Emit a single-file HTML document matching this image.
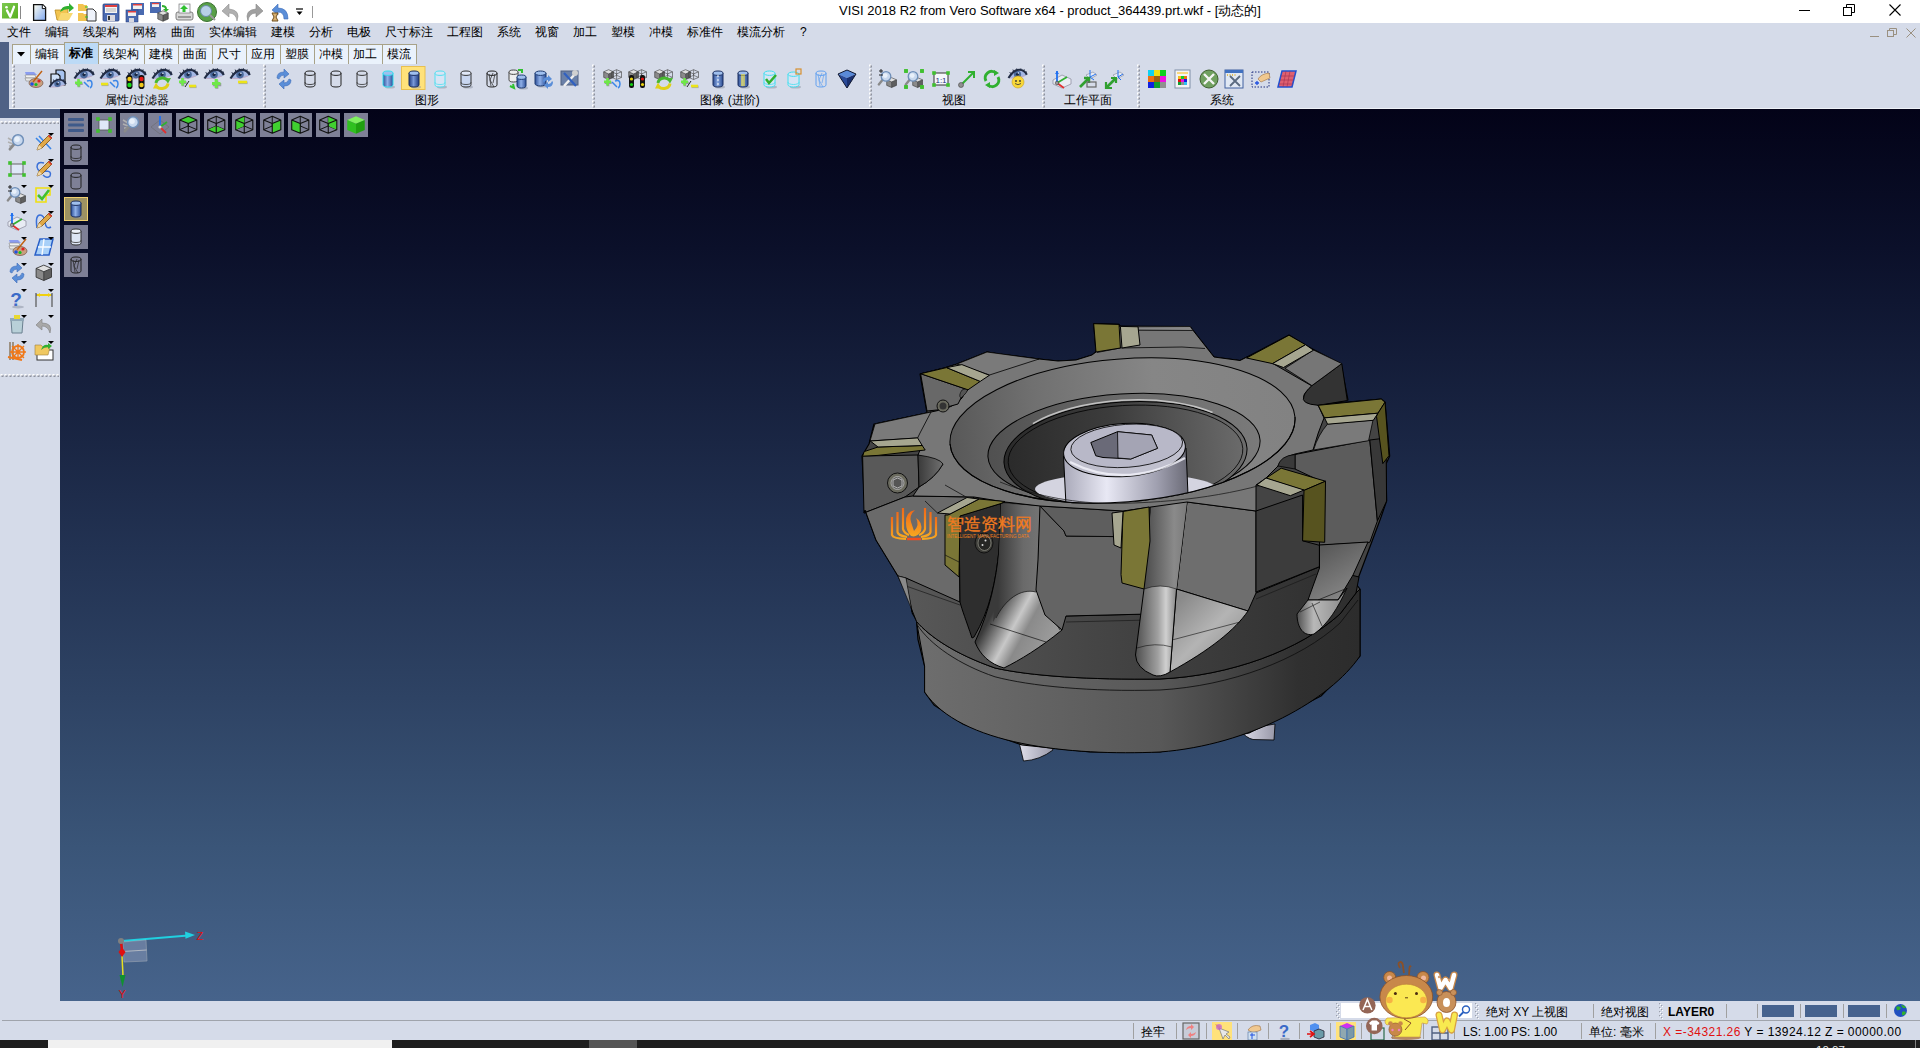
<!DOCTYPE html>
<html><head><meta charset="utf-8"><style>
*{margin:0;padding:0;box-sizing:border-box}
html,body{width:1920px;height:1048px;overflow:hidden;background:#d5dbe9;font-family:"Liberation Sans",sans-serif;font-size:12px;color:#000;position:relative}
.abs{position:absolute}
.t{position:absolute;white-space:nowrap;line-height:14px;font-size:12px}
svg{overflow:visible}
</style></head><body>
<svg width="0" height="0" style="position:absolute"><defs><pattern id="dpv" width="3" height="4" patternUnits="userSpaceOnUse"><rect x="0" y="0.5" width="2" height="2" fill="#fff"/><rect x="1" y="1.5" width="2" height="2" fill="#8e929e"/><rect x="1" y="1.5" width="1" height="1" fill="#e8e8ec"/></pattern><pattern id="dph" width="4" height="3" patternUnits="userSpaceOnUse"><rect x="0.5" y="0" width="2" height="2" fill="#fff"/><rect x="1.5" y="1" width="2" height="2" fill="#8e929e"/><rect x="1.5" y="1" width="1" height="1" fill="#e8e8ec"/></pattern><pattern id="dps" width="4" height="4" patternUnits="userSpaceOnUse"><rect x="0" y="0" width="1.2" height="1.2" fill="#9a9eaa"/><rect x="2" y="2" width="1.2" height="1.2" fill="#9a9eaa"/><rect x="1" y="1" width="1" height="1" fill="#fff"/><rect x="3" y="3" width="1" height="1" fill="#fff"/></pattern></defs></svg>
<div class="abs" style="left:0px;top:0px;width:1920px;height:23px;background:#fff"></div>
<svg class="abs" style="left:2px;top:3px" width="16" height="16" viewBox="0 0 16 16"><defs><linearGradient id="vg" x1="0" y1="0" x2="1" y2="1"><stop offset="0" stop-color="#7cc850"/><stop offset="1" stop-color="#58b020"/></linearGradient></defs><rect x="0" y="0" width="16" height="15.5" fill="url(#vg)"/><path d="M5 7.5 L8.2 13.8 L12 3.8" fill="none" stroke="#fff" stroke-width="2.3" stroke-linecap="round" stroke-linejoin="round"/><circle cx="4.5" cy="4.2" r="1.3" fill="#fff"/></svg>
<div class="abs" style="left:20px;top:6px;width:1px;height:13px;background:#888"></div>
<svg class="abs" style="left:30px;top:2px" width="20" height="20" viewBox="0 0 20 20"><defs><linearGradient id="dg" x1="0" y1="0" x2="1" y2="1"><stop offset="0" stop-color="#fffff0"/><stop offset="1" stop-color="#80a8f0"/></linearGradient></defs><path d="M3.6 2.6 H12.8 L15.6 5.4 V18.4 H3.6Z" fill="url(#dg)" stroke="#111" stroke-width="1.3"/><path d="M12.3 2.6 V6.6 H15.6" fill="#fff" stroke="#111" stroke-width="1"/></svg>
<svg class="abs" style="left:54px;top:2px" width="20" height="20" viewBox="0 0 20 20"><path d="M1 8 H7 L9 6 H14 V18 H3Z" fill="#f2c450" stroke="#b88a20" stroke-width=".8"/><path d="M4 18 L7 11 H19 L15 18Z" fill="#f8d870"/><path d="M6 10 Q8 3 15 4 L15 1 L20 6 L15 10 L15 7 Q10 7 6 10Z" fill="#30b030"/></svg>
<svg class="abs" style="left:77px;top:2px" width="20" height="20" viewBox="0 0 20 20"><path d="M1 2 H6 L7 3 H10 V9 H1Z" fill="#f2c450"/><path d="M1 11 H6 L7 12 H10 V19 H1Z" fill="#f2c450"/><path d="M10 7 H16 L19 10 V19 H10Z" fill="#eef2fa" stroke="#333" stroke-width="1"/><path d="M8 5 H11 M8 15 H11" stroke="#30c030" stroke-width="1.2"/></svg>
<svg class="abs" style="left:101px;top:2px" width="20" height="20" viewBox="0 0 20 20"><rect x="2" y="2" width="16" height="17" rx="1" fill="#4a6ab0" stroke="#2a4080" stroke-width=".8"/><rect x="4" y="3" width="12" height="8" fill="#f4f4f4"/><rect x="4" y="3" width="12" height="2" fill="#e04040"/><path d="M5 7 H15 M5 9 H15" stroke="#999" stroke-width=".7"/><rect x="6" y="13" width="8" height="6" fill="#d8d8e0"/><rect x="7" y="14" width="2" height="4" fill="#333"/></svg>
<svg class="abs" style="left:125px;top:2px" width="20" height="20" viewBox="0 0 20 20"><rect x="6" y="1" width="13" height="12" fill="#4a6ab0"/><rect x="8" y="2" width="9" height="5" fill="#f0f0f0"/><rect x="8" y="2" width="9" height="1.5" fill="#e04040"/><rect x="1" y="8" width="12" height="12" fill="#4a6ab0" stroke="#2a4080" stroke-width=".6"/><rect x="3" y="9" width="8" height="5" fill="#f0f0f0"/><rect x="3" y="9" width="8" height="1.5" fill="#e04040"/><rect x="4" y="16" width="5" height="4" fill="#d8d8e0"/></svg>
<svg class="abs" style="left:149px;top:2px" width="20" height="20" viewBox="0 0 20 20"><rect x="1" y="0" width="11" height="11" fill="#4a6ab0"/><rect x="3" y="1" width="7" height="4" fill="#f0f0f0"/><rect x="3" y="1" width="7" height="1.2" fill="#e04040"/><g transform="translate(8,8) scale(0.75)"><path d="M1 4 L8 1 L15 4 L8 7Z" fill="#e0e0e0"/><path d="M1 4 L8 7 V15 L1 12Z" fill="#8a8a8a"/><path d="M15 4 L8 7 V15 L15 12Z" fill="#5f5f5f"/><path d="M8 1 L15 4 L15 12 L8 15 L1 12 L1 4Z M1 4 L8 7 L15 4 M8 7V15" fill="none" stroke="#333" stroke-width=".8"/></g><path d="M13 3 Q18 3 18 7 L20 7 L17 10 L14 7 L16 7 Q16 5 13 5Z" fill="#30b030"/></svg>
<svg class="abs" style="left:174px;top:2px" width="20" height="20" viewBox="0 0 20 20"><rect x="2" y="10" width="17" height="8" rx="2" fill="#d8d8d8" stroke="#666" stroke-width=".8"/><rect x="5" y="2" width="11" height="9" fill="#f4f8fc" stroke="#777" stroke-width=".7"/><path d="M10 3 L14 7 H11.5 V10 H8.5 V7 H6Z" fill="#30c030"/><rect x="4" y="14" width="13" height="2" fill="#999"/></svg>
<svg class="abs" style="left:197px;top:2px" width="20" height="20" viewBox="0 0 20 20"><circle cx="10" cy="10" r="9.5" fill="#58a048" stroke="#3a7030" stroke-width="1"/><circle cx="9" cy="9" r="5.5" fill="#b8d0e8" stroke="#6a8aa8" stroke-width="1"/><path d="M13 13 L18 18" stroke="#999" stroke-width="2"/></svg>
<svg class="abs" style="left:221px;top:2px" width="20" height="20" viewBox="0 0 20 20"><path d="M16 19 Q20 8 8 7 L8 2 L1 9 L8 15 L8 11 Q15 11 16 19Z" fill="#b0b0b0" stroke="#909090" stroke-width=".6"/></svg>
<svg class="abs" style="left:244px;top:2px" width="20" height="20" viewBox="0 0 20 20"><path d="M4 19 Q0 8 12 7 L12 2 L19 9 L12 15 L12 11 Q5 11 4 19Z" fill="#a0a0a0" stroke="#888" stroke-width=".6"/></svg>
<svg class="abs" style="left:269px;top:2px" width="20" height="20" viewBox="0 0 20 20"><path d="M19 17 Q19 6 9 6 L9 2 L3 8 L9 13 L9 10 Q15 10 15 17Z" fill="#5a8ed8" stroke="#3c6cb8" stroke-width=".6"/><path d="M3 11 H9 L7 15 L9 19 H3 L5 15Z" fill="#d8b070" stroke="#705020" stroke-width="1"/></svg>
<svg class="abs" style="left:295px;top:8px" width="9" height="8" viewBox="0 0 9 8"><path d="M1 1 H8" stroke="#000" stroke-width="1.2"/><path d="M1.5 3.5 H7.5 L4.5 7Z" fill="#000"/></svg>
<div class="abs" style="left:312px;top:6px;width:1px;height:12px;background:#999"></div>
<div class="t" style="left:839px;top:4px;font-size:13px;color:#000">VISI 2018 R2 from Vero Software x64 - product_364439.prt.wkf - [动态的]</div>
<div class="abs" style="left:1799px;top:10px;width:11px;height:1px;background:#000"></div>
<svg class="abs" style="left:1843px;top:4px" width="12" height="12" viewBox="0 0 12 12"><rect x="0.5" y="3.5" width="8" height="8" fill="none" stroke="#000"/><path d="M3.5 3.5 V0.5 H11.5 V8.5 H8.5" fill="none" stroke="#000"/></svg>
<svg class="abs" style="left:1889px;top:4px" width="12" height="12" viewBox="0 0 12 12"><path d="M0.5 0.5 L11.5 11.5 M11.5 0.5 L0.5 11.5" stroke="#000" stroke-width="1.1"/></svg>
<div class="abs" style="left:0px;top:23px;width:1920px;height:86px;background:#d5dbe9"></div>
<div class="t" style="left:7px;top:25px;font-size:12px;line-height:14px">文件</div>
<div class="t" style="left:45px;top:25px;font-size:12px;line-height:14px">编辑</div>
<div class="t" style="left:83px;top:25px;font-size:12px;line-height:14px">线架构</div>
<div class="t" style="left:133px;top:25px;font-size:12px;line-height:14px">网格</div>
<div class="t" style="left:171px;top:25px;font-size:12px;line-height:14px">曲面</div>
<div class="t" style="left:209px;top:25px;font-size:12px;line-height:14px">实体编辑</div>
<div class="t" style="left:271px;top:25px;font-size:12px;line-height:14px">建模</div>
<div class="t" style="left:309px;top:25px;font-size:12px;line-height:14px">分析</div>
<div class="t" style="left:347px;top:25px;font-size:12px;line-height:14px">电极</div>
<div class="t" style="left:385px;top:25px;font-size:12px;line-height:14px">尺寸标注</div>
<div class="t" style="left:447px;top:25px;font-size:12px;line-height:14px">工程图</div>
<div class="t" style="left:497px;top:25px;font-size:12px;line-height:14px">系统</div>
<div class="t" style="left:535px;top:25px;font-size:12px;line-height:14px">视窗</div>
<div class="t" style="left:573px;top:25px;font-size:12px;line-height:14px">加工</div>
<div class="t" style="left:611px;top:25px;font-size:12px;line-height:14px">塑模</div>
<div class="t" style="left:649px;top:25px;font-size:12px;line-height:14px">冲模</div>
<div class="t" style="left:687px;top:25px;font-size:12px;line-height:14px">标准件</div>
<div class="t" style="left:737px;top:25px;font-size:12px;line-height:14px">模流分析</div>
<div class="t" style="left:800px;top:25px;font-size:12px;line-height:14px">?</div>
<div class="abs" style="left:1870px;top:36px;width:9px;height:1px;background:#9a9080"></div>
<svg class="abs" style="left:1887px;top:28px" width="10" height="10" viewBox="0 0 10 10"><rect x="0.5" y="2.5" width="6" height="6" fill="none" stroke="#9a9080"/><path d="M2.5 2.5 V0.5 H9.5 V6.5 H6.5" fill="none" stroke="#9a9080"/></svg>
<svg class="abs" style="left:1906px;top:28px" width="10" height="10" viewBox="0 0 10 10"><path d="M0.5 0.5 L9.5 9.5 M9.5 0.5 L0.5 9.5" stroke="#9a9080"/></svg>
<div class="abs" style="left:0px;top:42px;width:9px;height:67px;background:#4f6185"></div>
<div class="abs" style="left:0px;top:109px;width:60px;height:9px;background:#4f6185"></div>
<div class="abs" style="left:9px;top:64px;width:1911px;height:45px;background:#d5dbe9"></div>
<div class="abs" style="left:9px;top:108px;width:1911px;height:1px;background:#eef1f7"></div>
<div class="abs" style="left:12px;top:44px;width:405px;height:20px;background:#eaf2fc;border:1px solid #a8a288;border-bottom:none"></div>
<svg class="abs" style="left:17px;top:52px" width="9" height="5" viewBox="0 0 9 5"><path d="M0 0 H8 L4 4.5Z" fill="#000"/></svg>
<div class="abs" style="left:30px;top:44px;width:1px;height:20px;background:#a8a288"></div>
<div class="t" style="left:30px;top:47px;width:34px;text-align:center;font-size:12px">编辑</div>
<div class="abs" style="left:64px;top:42px;width:35px;height:22px;background:#bcdaf6;border:1px solid #a8a288;border-bottom:none"></div>
<div class="t" style="left:64px;top:46px;width:34px;text-align:center;font-weight:bold;font-size:12px">标准</div>
<div class="abs" style="left:98px;top:44px;width:1px;height:20px;background:#a8a288"></div>
<div class="t" style="left:98px;top:47px;width:46px;text-align:center;font-size:12px">线架构</div>
<div class="abs" style="left:144px;top:44px;width:1px;height:20px;background:#a8a288"></div>
<div class="t" style="left:144px;top:47px;width:34px;text-align:center;font-size:12px">建模</div>
<div class="abs" style="left:178px;top:44px;width:1px;height:20px;background:#a8a288"></div>
<div class="t" style="left:178px;top:47px;width:34px;text-align:center;font-size:12px">曲面</div>
<div class="abs" style="left:212px;top:44px;width:1px;height:20px;background:#a8a288"></div>
<div class="t" style="left:212px;top:47px;width:34px;text-align:center;font-size:12px">尺寸</div>
<div class="abs" style="left:246px;top:44px;width:1px;height:20px;background:#a8a288"></div>
<div class="t" style="left:246px;top:47px;width:34px;text-align:center;font-size:12px">应用</div>
<div class="abs" style="left:280px;top:44px;width:1px;height:20px;background:#a8a288"></div>
<div class="t" style="left:280px;top:47px;width:34px;text-align:center;font-size:12px">塑膜</div>
<div class="abs" style="left:314px;top:44px;width:1px;height:20px;background:#a8a288"></div>
<div class="t" style="left:314px;top:47px;width:34px;text-align:center;font-size:12px">冲模</div>
<div class="abs" style="left:348px;top:44px;width:1px;height:20px;background:#a8a288"></div>
<div class="t" style="left:348px;top:47px;width:34px;text-align:center;font-size:12px">加工</div>
<div class="abs" style="left:382px;top:44px;width:1px;height:20px;background:#a8a288"></div>
<div class="t" style="left:382px;top:47px;width:34px;text-align:center;font-size:12px">模流</div>
<svg class="abs" style="left:12px;top:64px" width="3" height="44" viewBox="0 0 3 44"><rect width="3" height="44" fill="url(#dpv)"/></svg>
<svg class="abs" style="left:263px;top:64px" width="3" height="44" viewBox="0 0 3 44"><rect width="3" height="44" fill="url(#dpv)"/></svg>
<svg class="abs" style="left:592px;top:64px" width="3" height="44" viewBox="0 0 3 44"><rect width="3" height="44" fill="url(#dpv)"/></svg>
<svg class="abs" style="left:869px;top:64px" width="3" height="44" viewBox="0 0 3 44"><rect width="3" height="44" fill="url(#dpv)"/></svg>
<svg class="abs" style="left:1042px;top:64px" width="3" height="44" viewBox="0 0 3 44"><rect width="3" height="44" fill="url(#dpv)"/></svg>
<svg class="abs" style="left:1137px;top:64px" width="3" height="44" viewBox="0 0 3 44"><rect width="3" height="44" fill="url(#dpv)"/></svg>
<svg class="abs" style="left:23px;top:69px" width="20" height="20" viewBox="0 0 20 20"><path d="M2 3 H11 L14 6 H3Z" fill="#8a9cf0"/><path d="M2 6 H12 L13 9 H3Z" fill="#f0f0f0" stroke="#888" stroke-width=".6"/><path d="M2 9 H12 L13 12 H3Z" fill="#e8e8e8" stroke="#888" stroke-width=".6"/><ellipse cx="13" cy="14" rx="7" ry="4.5" fill="#c8a080" stroke="#806050" stroke-width=".8"/><circle cx="9" cy="15" r="1.8" fill="#2050e0"/><circle cx="13" cy="15.5" r="1.6" fill="#10c020"/><circle cx="16" cy="12" r="1.6" fill="#e02020"/><path d="M10 13 L19 2" stroke="#c06010" stroke-width="1.4"/></svg>
<svg class="abs" style="left:48px;top:69px" width="20" height="20" viewBox="0 0 20 20"><path d="M8 1 H15 L17 3 V16 H8Z" fill="#a8c4f0" stroke="#111" stroke-width="1.2"/><path d="M3 5 H10 L12 7 V16 H3Z" fill="#cfe0f8" stroke="#111" stroke-width="1.2"/><g transform="translate(1,10) scale(0.85)"><path d="M0.5 9.5 Q6 1.5 12 1.5 Q17.5 1.5 19.5 6.5 Q12 10.5 0.5 9.5Z" fill="#a4b8e4"/><path d="M2 9.4 Q10 10.8 18 7" fill="none" stroke="#c8a8c0" stroke-width=".8"/><circle cx="10" cy="5.6" r="3.8" fill="#4b6a9c"/><circle cx="10" cy="5.6" r="1.6" fill="#1a2844"/><circle cx="10.9" cy="4.3" r=".8" fill="#e8f0ff"/><path d="M0.5 9.5 Q6 0.6 12 0.8 Q17.5 1 19.8 6" fill="none" stroke="#222c44" stroke-width="2.2"/><path d="M3 5 L1.8 3.2 M6 2.6 L5.2 0.6 M9.5 1.4 L9.2 -0.6 M13 1.2 L13.6 -0.7 M16 2.2 L17.2 0.4 M18.4 4 L20 2.8" stroke="#222c44" stroke-width="1"/></g></svg>
<svg class="abs" style="left:74px;top:69px" width="20" height="20" viewBox="0 0 20 20"><g transform="translate(0,0) scale(1.0)"><path d="M0.5 9.5 Q6 1.5 12 1.5 Q17.5 1.5 19.5 6.5 Q12 10.5 0.5 9.5Z" fill="#a4b8e4"/><path d="M2 9.4 Q10 10.8 18 7" fill="none" stroke="#c8a8c0" stroke-width=".8"/><circle cx="10" cy="5.6" r="3.8" fill="#4b6a9c"/><circle cx="10" cy="5.6" r="1.6" fill="#1a2844"/><circle cx="10.9" cy="4.3" r=".8" fill="#e8f0ff"/><path d="M0.5 9.5 Q6 0.6 12 0.8 Q17.5 1 19.8 6" fill="none" stroke="#222c44" stroke-width="2.2"/><path d="M3 5 L1.8 3.2 M6 2.6 L5.2 0.6 M9.5 1.4 L9.2 -0.6 M13 1.2 L13.6 -0.7 M16 2.2 L17.2 0.4 M18.4 4 L20 2.8" stroke="#222c44" stroke-width="1"/></g><g transform="translate(1,10) scale(1.0)"><path d="M4 1.2V8.2M0.7 4.7H7.7" stroke="#707070" stroke-width="2.6" opacity=".6"/><path d="M3.5 0V7.5M0 3.7H7" stroke="#6ee848" stroke-width="2.6"/></g><g transform="translate(10,11)"><path d="M0 2 L5 7 M3 1 Q8 -1 8 4 Q8 7 6 8" fill="none" stroke="#3a86e8" stroke-width="1.5"/></g></svg>
<svg class="abs" style="left:100px;top:69px" width="20" height="20" viewBox="0 0 20 20"><g transform="translate(0,0) scale(1.0)"><path d="M0.5 9.5 Q6 1.5 12 1.5 Q17.5 1.5 19.5 6.5 Q12 10.5 0.5 9.5Z" fill="#a4b8e4"/><path d="M2 9.4 Q10 10.8 18 7" fill="none" stroke="#c8a8c0" stroke-width=".8"/><circle cx="10" cy="5.6" r="3.8" fill="#4b6a9c"/><circle cx="10" cy="5.6" r="1.6" fill="#1a2844"/><circle cx="10.9" cy="4.3" r=".8" fill="#e8f0ff"/><path d="M0.5 9.5 Q6 0.6 12 0.8 Q17.5 1 19.8 6" fill="none" stroke="#222c44" stroke-width="2.2"/><path d="M3 5 L1.8 3.2 M6 2.6 L5.2 0.6 M9.5 1.4 L9.2 -0.6 M13 1.2 L13.6 -0.7 M16 2.2 L17.2 0.4 M18.4 4 L20 2.8" stroke="#222c44" stroke-width="1"/></g><path d="M1.6 15.8H8.6" stroke="#808060" stroke-width="2.6" opacity=".5"/><path d="M1 15H8" stroke="#ece418" stroke-width="2.6"/><g transform="translate(10,11)"><path d="M0 2 L5 7 M3 1 Q8 -1 8 4 Q8 7 6 8" fill="none" stroke="#3a86e8" stroke-width="1.5"/></g></svg>
<svg class="abs" style="left:126px;top:69px" width="20" height="20" viewBox="0 0 20 20"><g transform="translate(0,0) scale(1.0)"><path d="M0.5 9.5 Q6 1.5 12 1.5 Q17.5 1.5 19.5 6.5 Q12 10.5 0.5 9.5Z" fill="#a4b8e4"/><path d="M2 9.4 Q10 10.8 18 7" fill="none" stroke="#c8a8c0" stroke-width=".8"/><circle cx="10" cy="5.6" r="3.8" fill="#4b6a9c"/><circle cx="10" cy="5.6" r="1.6" fill="#1a2844"/><circle cx="10.9" cy="4.3" r=".8" fill="#e8f0ff"/><path d="M0.5 9.5 Q6 0.6 12 0.8 Q17.5 1 19.8 6" fill="none" stroke="#222c44" stroke-width="2.2"/><path d="M3 5 L1.8 3.2 M6 2.6 L5.2 0.6 M9.5 1.4 L9.2 -0.6 M13 1.2 L13.6 -0.7 M16 2.2 L17.2 0.4 M18.4 4 L20 2.8" stroke="#222c44" stroke-width="1"/></g><rect x="0.5" y="6" width="6" height="14" rx="2.8" fill="#111"/><rect x="12.5" y="6" width="6" height="14" rx="2.8" fill="#111"/><circle cx="3.5" cy="10" r="2.2" fill="#f0c818"/><circle cx="3.5" cy="16" r="2.2" fill="#18d818"/><circle cx="15.5" cy="10" r="2.2" fill="#e81818"/><circle cx="15.5" cy="16" r="2.2" fill="#f0c818"/></svg>
<svg class="abs" style="left:152px;top:69px" width="20" height="20" viewBox="0 0 20 20"><g transform="translate(0,0) scale(1.0)"><path d="M0.5 9.5 Q6 1.5 12 1.5 Q17.5 1.5 19.5 6.5 Q12 10.5 0.5 9.5Z" fill="#a4b8e4"/><path d="M2 9.4 Q10 10.8 18 7" fill="none" stroke="#c8a8c0" stroke-width=".8"/><circle cx="10" cy="5.6" r="3.8" fill="#4b6a9c"/><circle cx="10" cy="5.6" r="1.6" fill="#1a2844"/><circle cx="10.9" cy="4.3" r=".8" fill="#e8f0ff"/><path d="M0.5 9.5 Q6 0.6 12 0.8 Q17.5 1 19.8 6" fill="none" stroke="#222c44" stroke-width="2.2"/><path d="M3 5 L1.8 3.2 M6 2.6 L5.2 0.6 M9.5 1.4 L9.2 -0.6 M13 1.2 L13.6 -0.7 M16 2.2 L17.2 0.4 M18.4 4 L20 2.8" stroke="#222c44" stroke-width="1"/></g><path d="M4 14 A6.5 5.5 0 0 1 15.5 11" fill="none" stroke="#48b830" stroke-width="3"/><path d="M12.5 9.5 L19 9 L16 14.5Z" fill="#48b830"/><path d="M16 14.5 A6.5 5.5 0 0 1 4.5 17.5" fill="none" stroke="#e0d018" stroke-width="3"/><path d="M7.5 19.5 L1 19.5 L4 13.5Z" fill="#e0d018"/></svg>
<svg class="abs" style="left:178px;top:69px" width="20" height="20" viewBox="0 0 20 20"><g transform="translate(0,0) scale(1.0)"><path d="M0.5 9.5 Q6 1.5 12 1.5 Q17.5 1.5 19.5 6.5 Q12 10.5 0.5 9.5Z" fill="#a4b8e4"/><path d="M2 9.4 Q10 10.8 18 7" fill="none" stroke="#c8a8c0" stroke-width=".8"/><circle cx="10" cy="5.6" r="3.8" fill="#4b6a9c"/><circle cx="10" cy="5.6" r="1.6" fill="#1a2844"/><circle cx="10.9" cy="4.3" r=".8" fill="#e8f0ff"/><path d="M0.5 9.5 Q6 0.6 12 0.8 Q17.5 1 19.8 6" fill="none" stroke="#222c44" stroke-width="2.2"/><path d="M3 5 L1.8 3.2 M6 2.6 L5.2 0.6 M9.5 1.4 L9.2 -0.6 M13 1.2 L13.6 -0.7 M16 2.2 L17.2 0.4 M18.4 4 L20 2.8" stroke="#222c44" stroke-width="1"/></g><g transform="translate(1,9) scale(1.0)"><path d="M4 1.2V8.2M0.7 4.7H7.7" stroke="#707070" stroke-width="2.6" opacity=".6"/><path d="M3.5 0V7.5M0 3.7H7" stroke="#6ee848" stroke-width="2.6"/></g><path d="M7 18 L11 12" stroke="#222" stroke-width="1"/><path d="M11.6 17.8H18.6" stroke="#808060" stroke-width="2.6" opacity=".5"/><path d="M11 17H18" stroke="#ece418" stroke-width="2.6"/></svg>
<svg class="abs" style="left:204px;top:69px" width="20" height="20" viewBox="0 0 20 20"><g transform="translate(0,0) scale(1.0)"><path d="M0.5 9.5 Q6 1.5 12 1.5 Q17.5 1.5 19.5 6.5 Q12 10.5 0.5 9.5Z" fill="#a4b8e4"/><path d="M2 9.4 Q10 10.8 18 7" fill="none" stroke="#c8a8c0" stroke-width=".8"/><circle cx="10" cy="5.6" r="3.8" fill="#4b6a9c"/><circle cx="10" cy="5.6" r="1.6" fill="#1a2844"/><circle cx="10.9" cy="4.3" r=".8" fill="#e8f0ff"/><path d="M0.5 9.5 Q6 0.6 12 0.8 Q17.5 1 19.8 6" fill="none" stroke="#222c44" stroke-width="2.2"/><path d="M3 5 L1.8 3.2 M6 2.6 L5.2 0.6 M9.5 1.4 L9.2 -0.6 M13 1.2 L13.6 -0.7 M16 2.2 L17.2 0.4 M18.4 4 L20 2.8" stroke="#222c44" stroke-width="1"/></g><g transform="translate(8,10) scale(1.2)"><path d="M4 1.2V8.2M0.7 4.7H7.7" stroke="#707070" stroke-width="2.6" opacity=".6"/><path d="M3.5 0V7.5M0 3.7H7" stroke="#6ee848" stroke-width="2.6"/></g></svg>
<svg class="abs" style="left:230px;top:69px" width="20" height="20" viewBox="0 0 20 20"><g transform="translate(0,0) scale(1.0)"><path d="M0.5 9.5 Q6 1.5 12 1.5 Q17.5 1.5 19.5 6.5 Q12 10.5 0.5 9.5Z" fill="#a4b8e4"/><path d="M2 9.4 Q10 10.8 18 7" fill="none" stroke="#c8a8c0" stroke-width=".8"/><circle cx="10" cy="5.6" r="3.8" fill="#4b6a9c"/><circle cx="10" cy="5.6" r="1.6" fill="#1a2844"/><circle cx="10.9" cy="4.3" r=".8" fill="#e8f0ff"/><path d="M0.5 9.5 Q6 0.6 12 0.8 Q17.5 1 19.8 6" fill="none" stroke="#222c44" stroke-width="2.2"/><path d="M3 5 L1.8 3.2 M6 2.6 L5.2 0.6 M9.5 1.4 L9.2 -0.6 M13 1.2 L13.6 -0.7 M16 2.2 L17.2 0.4 M18.4 4 L20 2.8" stroke="#222c44" stroke-width="1"/></g><path d="M8.6 13.8H17.6" stroke="#808060" stroke-width="2.6" opacity=".5"/><path d="M8 13H17" stroke="#ece418" stroke-width="2.6"/></svg>
<div class="t" style="left:77px;top:93px;width:120px;text-align:center;font-size:12px">属性/过滤器</div>
<svg class="abs" style="left:274px;top:69px" width="20" height="20" viewBox="0 0 20 20"><path d="M3 9 Q3 3 10 3 L10 0 L15 5 L10 9 L10 6 Q6 6 5 10Z" fill="#5a8ed8" stroke="#3c6cb8" stroke-width=".6"/><path d="M17 11 Q17 17 10 17 L10 20 L5 15 L10 11 L10 14 Q14 14 15 10Z" fill="#5a8ed8" stroke="#3c6cb8" stroke-width=".6"/></svg>
<svg class="abs" style="left:300px;top:69px" width="20" height="20" viewBox="0 0 20 20"><path d="M5 4.2 V15.8 A5.0 2.2 0 0 0 15 15.8 V4.2" fill="none" stroke="#222" stroke-width="1"/><ellipse cx="10.0" cy="4.2" rx="5.0" ry="2.2" fill="none" stroke="#222" stroke-width="1"/><path d="M5 13.3 A5.0 2.2 0 0 0 15 13.3" fill="none" stroke="#222" stroke-width="0.8"/></svg>
<svg class="abs" style="left:326px;top:69px" width="20" height="20" viewBox="0 0 20 20"><path d="M5 4.2 V15.8 A5.0 2.2 0 0 0 15 15.8 V4.2" fill="none" stroke="#222" stroke-width="1"/><ellipse cx="10.0" cy="4.2" rx="5.0" ry="2.2" fill="none" stroke="#222" stroke-width="1"/></svg>
<svg class="abs" style="left:352px;top:69px" width="20" height="20" viewBox="0 0 20 20"><path d="M5 4.2 V15.8 A5.0 2.2 0 0 0 15 15.8 V4.2" fill="none" stroke="#333" stroke-width="1"/><ellipse cx="10.0" cy="4.2" rx="5.0" ry="2.2" fill="none" stroke="#333" stroke-width="1"/><path d="M5 13.3 A5.0 2.2 0 0 0 15 13.3" fill="none" stroke="#333" stroke-width="0.8"/></svg>
<svg class="abs" style="left:378px;top:69px" width="20" height="20" viewBox="0 0 20 20"><defs><linearGradient id="bcg1"><stop offset="0" stop-color="#2c4f98"/><stop offset=".45" stop-color="#8fb0e8"/><stop offset="1" stop-color="#2c4f98"/></linearGradient></defs><ellipse cx="12.0" cy="18" rx="5.0" ry="1.5" fill="#8890a0" opacity=".5"/><path d="M5 4.2 V15.8 A5.0 2.2 0 0 0 15 15.8 V4.2" fill="url(#bcg1)" stroke="#30e0f0" stroke-width="1"/><ellipse cx="10.0" cy="4.2" rx="5.0" ry="2.2" fill="#9fbfee" stroke="#30e0f0" stroke-width="1"/></svg>
<svg class="abs" style="left:404px;top:69px" width="20" height="20" viewBox="0 0 20 20"><rect x="-2.5" y="-2.5" width="23.5" height="23" fill="#ffe27a" stroke="#e8c050" stroke-width="1"/><defs><linearGradient id="bcg2"><stop offset="0" stop-color="#1e3a80"/><stop offset=".45" stop-color="#7898d8"/><stop offset="1" stop-color="#1e3a80"/></linearGradient></defs><ellipse cx="12.0" cy="18" rx="5.0" ry="1.5" fill="#8890a0" opacity=".5"/><path d="M5 4.2 V15.8 A5.0 2.2 0 0 0 15 15.8 V4.2" fill="url(#bcg2)" stroke="#1a2e60" stroke-width="1"/><ellipse cx="10.0" cy="4.2" rx="5.0" ry="2.2" fill="#9fbfee" stroke="#1a2e60" stroke-width="1"/></svg>
<svg class="abs" style="left:430px;top:69px" width="20" height="20" viewBox="0 0 20 20"><ellipse cx="12.0" cy="18" rx="5.0" ry="1.5" fill="#8890a0" opacity=".5"/><path d="M5 4.2 V15.8 A5.0 2.2 0 0 0 15 15.8 V4.2" fill="#d8e4f4" stroke="#50e0f0" stroke-width="1"/><ellipse cx="10.0" cy="4.2" rx="5.0" ry="2.2" fill="#d8e4f4" stroke="#50e0f0" stroke-width="1"/><path d="M5 13.3 A5.0 2.2 0 0 0 15 13.3" fill="none" stroke="#50e0f0" stroke-width="0.8"/></svg>
<svg class="abs" style="left:456px;top:69px" width="20" height="20" viewBox="0 0 20 20"><ellipse cx="12.0" cy="18" rx="5.0" ry="1.5" fill="#8890a0" opacity=".5"/><path d="M5 4.2 V15.8 A5.0 2.2 0 0 0 15 15.8 V4.2" fill="#c8d6f0" stroke="#333" stroke-width="1"/><ellipse cx="10.0" cy="4.2" rx="5.0" ry="2.2" fill="#e0e8f8" stroke="#333" stroke-width="1"/><path d="M5 13.3 A5.0 2.2 0 0 0 15 13.3" fill="none" stroke="#333" stroke-width="0.8"/></svg>
<svg class="abs" style="left:482px;top:69px" width="20" height="20" viewBox="0 0 20 20"><path d="M5 4.2 V15.8 A5.0 2.2 0 0 0 15 15.8 V4.2" fill="none" stroke="#222" stroke-width="1"/><ellipse cx="10.0" cy="4.2" rx="5.0" ry="2.2" fill="none" stroke="#222" stroke-width="1"/><path d="M7 5 L9 17 M11 4 L8 11 L12 18 M13 5 L11 14" stroke="#222" stroke-width=".7" fill="none"/></svg>
<svg class="abs" style="left:508px;top:69px" width="20" height="20" viewBox="0 0 20 20"><path d="M1 3.2 V10.8 A4.5 2.2 0 0 0 10 10.8 V3.2" fill="#eee" stroke="#444" stroke-width="1"/><ellipse cx="5.5" cy="3.2" rx="4.5" ry="2.2" fill="#eee" stroke="#444" stroke-width="1"/><defs><linearGradient id="bcg3"><stop offset="0" stop-color="#2c4f98"/><stop offset=".45" stop-color="#8fb0e8"/><stop offset="1" stop-color="#2c4f98"/></linearGradient></defs><ellipse cx="15.5" cy="19" rx="4.5" ry="1.5" fill="#8890a0" opacity=".5"/><path d="M9 8.2 V16.8 A4.5 2.2 0 0 0 18 16.8 V8.2" fill="url(#bcg3)" stroke="#1d3a70" stroke-width="1"/><ellipse cx="13.5" cy="8.2" rx="4.5" ry="2.2" fill="#9fbfee" stroke="#1d3a70" stroke-width="1"/><path d="M10 1 L14 1 L14 4" stroke="#30c030" stroke-width="2" fill="none"/><path d="M2 17 L6 19 L5 15" stroke="#30c030" stroke-width="2" fill="none"/></svg>
<svg class="abs" style="left:534px;top:69px" width="20" height="20" viewBox="0 0 20 20"><defs><linearGradient id="bcg4"><stop offset="0" stop-color="#2c4f98"/><stop offset=".45" stop-color="#8fb0e8"/><stop offset="1" stop-color="#2c4f98"/></linearGradient></defs><ellipse cx="8.5" cy="17" rx="5.5" ry="1.5" fill="#8890a0" opacity=".5"/><path d="M1 4.2 V14.8 A5.5 2.2 0 0 0 12 14.8 V4.2" fill="url(#bcg4)" stroke="#1d3a70" stroke-width="1"/><ellipse cx="6.5" cy="4.2" rx="5.5" ry="2.2" fill="#9fbfee" stroke="#1d3a70" stroke-width="1"/><path d="M9 12 Q9 8 14 8 L14 6 L18 10 L14 13 L14 11 Q11 11 10 14Z" fill="#5a8ed8"/><path d="M19 13 Q19 18 14 18 L14 20 L10 16 L14 13 L14 15 Q17 15 18 12Z" fill="#5a8ed8"/></svg>
<svg class="abs" style="left:560px;top:69px" width="20" height="20" viewBox="0 0 20 20"><rect x="1" y="2" width="17" height="14" fill="#6a80a8" stroke="#506080"/><path d="M4 17 L16 4" stroke="#f0f0f0" stroke-width="2.5"/><path d="M4 4 L16 17" stroke="#3060c0" stroke-width="2.2"/><circle cx="15" cy="4" r="3" fill="#d0d0d0"/></svg>
<div class="t" style="left:367px;top:93px;width:120px;text-align:center;font-size:12px">图形</div>
<svg class="abs" style="left:603px;top:69px" width="20" height="20" viewBox="0 0 20 20"><g transform="translate(0,0) scale(0.7)"><path d="M1 4 L8 1 L15 4 L8 7Z" fill="#e0e0e0"/><path d="M1 4 L8 7 V15 L1 12Z" fill="#8a8a8a"/><path d="M15 4 L8 7 V15 L15 12Z" fill="#5f5f5f"/><path d="M8 1 L15 4 L15 12 L8 15 L1 12 L1 4Z M1 4 L8 7 L15 4 M8 7V15" fill="none" stroke="#333" stroke-width=".8"/></g><g transform="translate(8,0) scale(0.7)" fill="none" stroke="#444" stroke-linejoin="round"><path d="M8 1 V9 M1 12 L8 9 L15 12" stroke-width=".8"/><path d="M8 1 L15 4 L15 12 L8 15 L1 12 L1 4Z M1 4 L8 7 L15 4 M8 7 V15" stroke-width=".9"/></g><g transform="translate(1,9) scale(1.0)"><path d="M4 1.2V8.2M0.7 4.7H7.7" stroke="#707070" stroke-width="2.6" opacity=".6"/><path d="M3.5 0V7.5M0 3.7H7" stroke="#6ee848" stroke-width="2.6"/></g><g transform="translate(9,11)"><path d="M0 2 L5 7 M3 1 Q8 -1 8 4 Q8 7 6 8" fill="none" stroke="#3a86e8" stroke-width="1.5"/></g></svg>
<svg class="abs" style="left:628px;top:69px" width="20" height="20" viewBox="0 0 20 20"><g transform="translate(0,0) scale(0.7)"><path d="M1 4 L8 1 L15 4 L8 7Z" fill="#e0e0e0"/><path d="M1 4 L8 7 V15 L1 12Z" fill="#8a8a8a"/><path d="M15 4 L8 7 V15 L15 12Z" fill="#5f5f5f"/><path d="M8 1 L15 4 L15 12 L8 15 L1 12 L1 4Z M1 4 L8 7 L15 4 M8 7V15" fill="none" stroke="#333" stroke-width=".8"/></g><g transform="translate(8,0) scale(0.7)" fill="none" stroke="#444" stroke-linejoin="round"><path d="M8 1 V9 M1 12 L8 9 L15 12" stroke-width=".8"/><path d="M8 1 L15 4 L15 12 L8 15 L1 12 L1 4Z M1 4 L8 7 L15 4 M8 7 V15" stroke-width=".9"/></g><rect x="1" y="6" width="5" height="13" rx="2" fill="#111"/><rect x="12" y="6" width="5" height="13" rx="2" fill="#111"/><circle cx="3.5" cy="10" r="1.6" fill="#e8d010"/><circle cx="3.5" cy="15.5" r="1.6" fill="#10d010"/><circle cx="14.5" cy="10" r="1.6" fill="#e01010"/><circle cx="14.5" cy="15.5" r="1.6" fill="#e8d010"/></svg>
<svg class="abs" style="left:654px;top:69px" width="20" height="20" viewBox="0 0 20 20"><g transform="translate(0,0) scale(0.7)"><path d="M1 4 L8 1 L15 4 L8 7Z" fill="#e0e0e0"/><path d="M1 4 L8 7 V15 L1 12Z" fill="#8a8a8a"/><path d="M15 4 L8 7 V15 L15 12Z" fill="#5f5f5f"/><path d="M8 1 L15 4 L15 12 L8 15 L1 12 L1 4Z M1 4 L8 7 L15 4 M8 7V15" fill="none" stroke="#333" stroke-width=".8"/></g><g transform="translate(8,0) scale(0.7)" fill="none" stroke="#444" stroke-linejoin="round"><path d="M8 1 V9 M1 12 L8 9 L15 12" stroke-width=".8"/><path d="M8 1 L15 4 L15 12 L8 15 L1 12 L1 4Z M1 4 L8 7 L15 4 M8 7 V15" stroke-width=".9"/></g><path d="M4 14 A6.5 5.5 0 0 1 15.5 11" fill="none" stroke="#48b830" stroke-width="3"/><path d="M12.5 9.5 L19 9 L16 14.5Z" fill="#48b830"/><path d="M16 14.5 A6.5 5.5 0 0 1 4.5 17.5" fill="none" stroke="#e0d018" stroke-width="3"/><path d="M7.5 19.5 L1 19.5 L4 13.5Z" fill="#e0d018"/></svg>
<svg class="abs" style="left:680px;top:69px" width="20" height="20" viewBox="0 0 20 20"><g transform="translate(0,0) scale(0.7)"><path d="M1 4 L8 1 L15 4 L8 7Z" fill="#e0e0e0"/><path d="M1 4 L8 7 V15 L1 12Z" fill="#8a8a8a"/><path d="M15 4 L8 7 V15 L15 12Z" fill="#5f5f5f"/><path d="M8 1 L15 4 L15 12 L8 15 L1 12 L1 4Z M1 4 L8 7 L15 4 M8 7V15" fill="none" stroke="#333" stroke-width=".8"/></g><g transform="translate(8,0) scale(0.7)" fill="none" stroke="#444" stroke-linejoin="round"><path d="M8 1 V9 M1 12 L8 9 L15 12" stroke-width=".8"/><path d="M8 1 L15 4 L15 12 L8 15 L1 12 L1 4Z M1 4 L8 7 L15 4 M8 7 V15" stroke-width=".9"/></g><g transform="translate(1,9) scale(1.0)"><path d="M4 1.2V8.2M0.7 4.7H7.7" stroke="#707070" stroke-width="2.6" opacity=".6"/><path d="M3.5 0V7.5M0 3.7H7" stroke="#6ee848" stroke-width="2.6"/></g><path d="M7 18 L11 12" stroke="#222" stroke-width="1"/><path d="M11.6 17.8H18.6" stroke="#808060" stroke-width="2.6" opacity=".5"/><path d="M11 17H18" stroke="#ece418" stroke-width="2.6"/></svg>
<svg class="abs" style="left:708px;top:69px" width="20" height="20" viewBox="0 0 20 20"><defs><linearGradient id="bcg5"><stop offset="0" stop-color="#2a4a90"/><stop offset=".45" stop-color="#88a8e0"/><stop offset="1" stop-color="#2a4a90"/></linearGradient></defs><ellipse cx="12.0" cy="18" rx="5.0" ry="1.5" fill="#8890a0" opacity=".5"/><path d="M5 4.2 V15.8 A5.0 2.2 0 0 0 15 15.8 V4.2" fill="url(#bcg5)" stroke="#1a2e60" stroke-width="1"/><ellipse cx="10.0" cy="4.2" rx="5.0" ry="2.2" fill="#9fbfee" stroke="#1a2e60" stroke-width="1"/><path d="M10 6 V17" stroke="#fff" stroke-width="1" stroke-dasharray="2 2"/></svg>
<svg class="abs" style="left:733px;top:69px" width="20" height="20" viewBox="0 0 20 20"><defs><linearGradient id="bcg6"><stop offset="0" stop-color="#2a4a90"/><stop offset=".45" stop-color="#88a8e0"/><stop offset="1" stop-color="#2a4a90"/></linearGradient></defs><ellipse cx="12.0" cy="18" rx="5.0" ry="1.5" fill="#8890a0" opacity=".5"/><path d="M5 4.2 V15.8 A5.0 2.2 0 0 0 15 15.8 V4.2" fill="url(#bcg6)" stroke="#1a2e60" stroke-width="1"/><ellipse cx="10.0" cy="4.2" rx="5.0" ry="2.2" fill="#9fbfee" stroke="#1a2e60" stroke-width="1"/><path d="M9 5 V17 M11 5 V17" stroke="#f0e040" stroke-width="1.2"/></svg>
<svg class="abs" style="left:760px;top:69px" width="20" height="20" viewBox="0 0 20 20"><ellipse cx="11.5" cy="18" rx="5.5" ry="1.5" fill="#8890a0" opacity=".5"/><path d="M4 4.2 V15.8 A5.5 2.2 0 0 0 15 15.8 V4.2" fill="#d8e4f4" stroke="#40e0f0" stroke-width="1"/><ellipse cx="9.5" cy="4.2" rx="5.5" ry="2.2" fill="#d8e4f4" stroke="#40e0f0" stroke-width="1"/><path d="M4 13.3 A5.5 2.2 0 0 0 15 13.3" fill="none" stroke="#40e0f0" stroke-width="0.8"/><path d="M6 10 L9 14 L16 6" stroke="#30b030" stroke-width="2.5" fill="none"/></svg>
<svg class="abs" style="left:784px;top:69px" width="20" height="20" viewBox="0 0 20 20"><ellipse cx="11.5" cy="18" rx="5.5" ry="1.5" fill="#8890a0" opacity=".5"/><path d="M4 5.2 V15.8 A5.5 2.2 0 0 0 15 15.8 V5.2" fill="#d8e4f4" stroke="#40e0f0" stroke-width="1"/><ellipse cx="9.5" cy="5.2" rx="5.5" ry="2.2" fill="#d8e4f4" stroke="#40e0f0" stroke-width="1"/><path d="M4 13.3 A5.5 2.2 0 0 0 15 13.3" fill="none" stroke="#40e0f0" stroke-width="0.8"/><rect x="12" y="0" width="5" height="5" fill="none" stroke="#d89030" stroke-width="1.2"/></svg>
<svg class="abs" style="left:811px;top:69px" width="20" height="20" viewBox="0 0 20 20"><path d="M5 4.2 V15.8 A5.0 2.2 0 0 0 15 15.8 V4.2" fill="none" stroke="#60a0f0" stroke-width="1"/><ellipse cx="10.0" cy="4.2" rx="5.0" ry="2.2" fill="none" stroke="#60a0f0" stroke-width="1"/><path d="M7 5 L9 17 M11 4 L8 11 L12 18 M13 5 L11 14" stroke="#60a0f0" stroke-width=".7" fill="none"/></svg>
<svg class="abs" style="left:837px;top:69px" width="20" height="20" viewBox="0 0 20 20"><path d="M1 5 L10 1 L19 5 L10 9Z" fill="#5a8ad8"/><path d="M1 5 L10 9 L10 19Z" fill="#2a4a98"/><path d="M19 5 L10 9 L10 19Z" fill="#1a3070"/><path d="M1 5 L10 1 L19 5 L10 19Z" fill="none" stroke="#101830" stroke-width="1"/></svg>
<div class="t" style="left:670px;top:93px;width:120px;text-align:center;font-size:12px">图像 (进阶)</div>
<svg class="abs" style="left:878px;top:69px" width="20" height="20" viewBox="0 0 20 20"><g transform="translate(8,8) scale(0.7)"><path d="M1 4 L8 1 L15 4 L8 7Z" fill="#e0e0e0"/><path d="M1 4 L8 7 V15 L1 12Z" fill="#8a8a8a"/><path d="M15 4 L8 7 V15 L15 12Z" fill="#5f5f5f"/><path d="M8 1 L15 4 L15 12 L8 15 L1 12 L1 4Z M1 4 L8 7 L15 4 M8 7V15" fill="none" stroke="#333" stroke-width=".8"/></g><g transform="translate(0,1) scale(0.8)"><path d="M6 12 L1 18" stroke="#8a8a8a" stroke-width="3" stroke-linecap="round"/><circle cx="10" cy="8" r="6" fill="#c8d8ee" stroke="#6f8fb8" stroke-width="1.6"/><circle cx="9" cy="7" r="3" fill="#e8f0fa"/></g><path d="M1 2 H5 M3 0 V4 M1 6 H5" stroke="#111" stroke-width=".9"/></svg>
<svg class="abs" style="left:904px;top:69px" width="20" height="20" viewBox="0 0 20 20"><g transform="translate(8,8) scale(0.7)"><path d="M1 4 L8 1 L15 4 L8 7Z" fill="#e0e0e0"/><path d="M1 4 L8 7 V15 L1 12Z" fill="#8a8a8a"/><path d="M15 4 L8 7 V15 L15 12Z" fill="#5f5f5f"/><path d="M8 1 L15 4 L15 12 L8 15 L1 12 L1 4Z M1 4 L8 7 L15 4 M8 7V15" fill="none" stroke="#333" stroke-width=".8"/></g><g transform="translate(1,1) scale(0.8)"><path d="M6 12 L1 18" stroke="#8a8a8a" stroke-width="3" stroke-linecap="round"/><circle cx="10" cy="8" r="6" fill="#c8d8ee" stroke="#6f8fb8" stroke-width="1.6"/><circle cx="9" cy="7" r="3" fill="#e8f0fa"/></g><rect x="0.19999999999999996" y="0.19999999999999996" width="3.6" height="3.6" fill="#40c030"/><rect x="16.2" y="0.19999999999999996" width="3.6" height="3.6" fill="#40c030"/><rect x="0.19999999999999996" y="0.19999999999999996" width="3.6" height="3.6" fill="#40c030"/><rect x="16.2" y="0.19999999999999996" width="3.6" height="3.6" fill="#40c030"/><rect x="0.19999999999999996" y="16.2" width="3.6" height="3.6" fill="#40c030"/><rect x="16.2" y="16.2" width="3.6" height="3.6" fill="#40c030"/><rect x="0.19999999999999996" y="16.2" width="3.6" height="3.6" fill="#40c030"/><rect x="16.2" y="16.2" width="3.6" height="3.6" fill="#40c030"/></svg>
<svg class="abs" style="left:931px;top:69px" width="20" height="20" viewBox="0 0 20 20"><rect x="3" y="4" width="14" height="12" fill="#f4f6fb" stroke="#333" stroke-width="1"/><text x="10" y="14" font-size="8" text-anchor="middle" font-family="Liberation Sans" fill="#203080">1:1</text><rect x="1.2" y="2.2" width="3.6" height="3.6" fill="#40c030"/><rect x="15.2" y="2.2" width="3.6" height="3.6" fill="#40c030"/><rect x="1.2" y="14.2" width="3.6" height="3.6" fill="#40c030"/><rect x="15.2" y="14.2" width="3.6" height="3.6" fill="#40c030"/></svg>
<svg class="abs" style="left:957px;top:69px" width="20" height="20" viewBox="0 0 20 20"><path d="M4 16 L16 4" stroke="#30b030" stroke-width="2"/><path d="M11 3 H17 V9" fill="none" stroke="#30b030" stroke-width="2"/><circle cx="4" cy="16" r="2.5" fill="#909090" stroke="#444" stroke-width=".6"/></svg>
<svg class="abs" style="left:982px;top:69px" width="20" height="20" viewBox="0 0 20 20"><path d="M4 12 A6.5 6.5 0 0 1 14 4" fill="none" stroke="#30b030" stroke-width="3"/><path d="M16 8 A6.5 6.5 0 0 1 6 16" fill="none" stroke="#30b030" stroke-width="3"/><path d="M12 1 L17 4 L12 7Z M8 13 L3 16 L8 19Z" fill="#30b030"/></svg>
<svg class="abs" style="left:1008px;top:69px" width="20" height="20" viewBox="0 0 20 20"><g transform="translate(0,0) scale(0.95)"><path d="M0.5 9.5 Q6 1.5 12 1.5 Q17.5 1.5 19.5 6.5 Q12 10.5 0.5 9.5Z" fill="#a4b8e4"/><path d="M2 9.4 Q10 10.8 18 7" fill="none" stroke="#c8a8c0" stroke-width=".8"/><circle cx="10" cy="5.6" r="3.8" fill="#4b6a9c"/><circle cx="10" cy="5.6" r="1.6" fill="#1a2844"/><circle cx="10.9" cy="4.3" r=".8" fill="#e8f0ff"/><path d="M0.5 9.5 Q6 0.6 12 0.8 Q17.5 1 19.8 6" fill="none" stroke="#222c44" stroke-width="2.2"/><path d="M3 5 L1.8 3.2 M6 2.6 L5.2 0.6 M9.5 1.4 L9.2 -0.6 M13 1.2 L13.6 -0.7 M16 2.2 L17.2 0.4 M18.4 4 L20 2.8" stroke="#222c44" stroke-width="1"/></g><circle cx="10" cy="13" r="6" fill="#f8d838" stroke="#c8a020" stroke-width=".6"/><circle cx="8" cy="12" r=".9" fill="#333"/><circle cx="12" cy="12" r=".9" fill="#333"/><path d="M7 14.5 Q10 17 13 14.5" stroke="#333" fill="none" stroke-width=".8"/></svg>
<div class="t" style="left:894px;top:93px;width:120px;text-align:center;font-size:12px">视图</div>
<svg class="abs" style="left:1052px;top:69px" width="20" height="20" viewBox="0 0 20 20"><path d="M1 11 L10 6 L19 10 L19 15 L10 19 L1 15Z" fill="#e8ecf4" stroke="#889" stroke-width=".7"/><path d="M5 14 V2" stroke="#2070f0" stroke-width="1.8"/><path d="M5 2 L3 5 H7Z" fill="#2070f0"/><path d="M5 14 L15 8" stroke="#30b030" stroke-width="1.8"/><path d="M5 14 L12 19" stroke="#e03030" stroke-width="1.8"/><circle cx="5" cy="14" r="1.8" fill="#999" stroke="#333" stroke-width=".5"/></svg>
<svg class="abs" style="left:1078px;top:69px" width="20" height="20" viewBox="0 0 20 20"><path d="M8 6 L15 3 L19 6 L12 10Z" fill="#e8ecf4" stroke="#889" stroke-width=".6"/><path d="M12 8 V1 M12 8 L18 5 M12 8 L16 11" stroke="#2070f0" stroke-width="1"/><path d="M2 18 L10 10" stroke="#30a030" stroke-width="2.6"/><path d="M6 9 H11 V14" fill="none" stroke="#30a030" stroke-width="2.4"/><rect x="9" y="13" width="9" height="5" fill="none" stroke="#666" stroke-width="1.2"/></svg>
<svg class="abs" style="left:1105px;top:69px" width="20" height="20" viewBox="0 0 20 20"><path d="M8 6 L15 3 L19 6 L12 10Z" fill="#e8ecf4" stroke="#889" stroke-width=".6"/><path d="M13 8 V1 M13 8 L18 5 M13 8 L16 11" stroke="#2070f0" stroke-width="1"/><path d="M2 18 L10 10" stroke="#30a030" stroke-width="2.6"/><path d="M6 9 H11 V14 M1 13 V19 H7" fill="none" stroke="#30a030" stroke-width="2.2"/></svg>
<div class="t" style="left:1028px;top:93px;width:120px;text-align:center;font-size:12px">工作平面</div>
<svg class="abs" style="left:1147px;top:69px" width="20" height="20" viewBox="0 0 20 20"><rect x="1" y="1" width="6" height="6" fill="#10d0f0"/><rect x="7" y="1" width="6" height="6" fill="#f0e010"/><rect x="13" y="1" width="6" height="6" fill="#10d020"/><rect x="1" y="7" width="6" height="6" fill="#f07010"/><rect x="7" y="7" width="6" height="6" fill="#a06010"/><rect x="13" y="7" width="6" height="6" fill="#f010e0"/><rect x="1" y="13" width="6" height="6" fill="#1020e0"/><rect x="7" y="13" width="6" height="6" fill="#10a030"/><rect x="13" y="13" width="6" height="6" fill="#909090"/></svg>
<svg class="abs" style="left:1172px;top:69px" width="20" height="20" viewBox="0 0 20 20"><rect x="3" y="1" width="15" height="18" fill="#f4f4f4" stroke="#8090a8"/><rect x="5" y="3" width="11" height="2" fill="#f8d880"/><rect x="6" y="7" width="3" height="3" fill="#f0c020"/><rect x="9" y="7" width="3" height="3" fill="#10d020"/><rect x="12" y="7" width="3" height="3" fill="#f07010"/><rect x="6" y="10" width="3" height="3" fill="#e01010"/><rect x="9" y="10" width="3" height="3" fill="#f010e0"/><rect x="12" y="10" width="3" height="3" fill="#1020e0"/><rect x="6" y="13" width="3" height="3" fill="#10a030"/><rect x="9" y="13" width="3" height="3" fill="#909090"/><rect x="12" y="13" width="3" height="3" fill="#30c0f0"/></svg>
<svg class="abs" style="left:1199px;top:69px" width="20" height="20" viewBox="0 0 20 20"><circle cx="10" cy="10" r="9" fill="#70a060" stroke="#406030" stroke-width="1"/><path d="M5 15 L15 5 M5 5 L15 15" stroke="#f4f4f4" stroke-width="2.4"/></svg>
<svg class="abs" style="left:1224px;top:69px" width="20" height="20" viewBox="0 0 20 20"><rect x="1" y="1" width="18" height="18" fill="#e0e8f4" stroke="#4060a0"/><rect x="1" y="1" width="18" height="3" fill="#4070c0"/><path d="M3 6 H13" stroke="#e0b020" stroke-dasharray="1 1.5" stroke-width="1.5"/><path d="M6 17 L16 7 M6 7 L16 17" stroke="#5a6a80" stroke-width="1.8"/></svg>
<svg class="abs" style="left:1251px;top:69px" width="20" height="20" viewBox="0 0 20 20"><rect x="1" y="3" width="17" height="15" fill="none" stroke="#203080" stroke-dasharray="1.5 1.5" stroke-width="1"/><path d="M7 10 Q10 5 18 4 L19 9 L10 13Z" fill="#f0c890" stroke="#a07040" stroke-width=".6"/><path d="M4 14 H8 M6 12 V16" stroke="#2050e0" stroke-width="1.3"/></svg>
<svg class="abs" style="left:1277px;top:69px" width="20" height="20" viewBox="0 0 20 20"><path d="M5 2 L19 2 L15 18 L1 18Z" fill="#e06070" stroke="#2050d0" stroke-width="1.5"/><path d="M4 7 H18 M3 11 H17 M2 15 H16 M9 2 L6 18 M13 2 L10 18" stroke="#a03050" stroke-width=".6"/></svg>
<div class="t" style="left:1162px;top:93px;width:120px;text-align:center;font-size:12px">系统</div>
<div class="abs" style="left:0px;top:118px;width:59px;height:883px;background:#d5dbe9"></div>
<svg class="abs" style="left:0px;top:121px" width="59" height="3" viewBox="0 0 59 3"><rect width="59" height="3" fill="url(#dph)"/></svg>
<svg class="abs" style="left:0px;top:374px" width="59" height="3" viewBox="0 0 59 3"><rect width="59" height="3" fill="url(#dph)"/></svg>
<svg class="abs" style="left:7px;top:133px" width="20" height="20" viewBox="0 0 20 20"><path d="M1 5 L6 8 M1 9 L6 11 M2 13 L6 13" stroke="#b0b0b0" stroke-width="1.5"/><g transform="translate(2,0) scale(0.9)"><path d="M6 12 L1 18" stroke="#8a8a8a" stroke-width="3" stroke-linecap="round"/><circle cx="10" cy="8" r="6" fill="#c8d8ee" stroke="#6f8fb8" stroke-width="1.6"/><circle cx="9" cy="7" r="3" fill="#e8f0fa"/></g></svg>
<svg class="abs" style="left:34px;top:133px" width="20" height="20" viewBox="0 0 20 20"><path d="M2 5 L8 11 M5 3 L17 16" stroke="#3a86e8" stroke-width="1.6"/><g transform="translate(0,0)"><path d="M3 17 L5 12 L15 2 L18 5 L8 15Z" fill="#e0a848" stroke="#7a5010" stroke-width=".8"/><path d="M15 2 L18 5 L17 6 L14 3Z" fill="#e03030"/><path d="M3 17 L5 12 L8 15Z" fill="#f0d8a8"/></g></svg>
<svg class="abs" style="left:48px;top:133px" width="6" height="3" viewBox="0 0 6 3"><path d="M0 0 h6 l-3 3z" fill="#000"/></svg>
<svg class="abs" style="left:7px;top:159px" width="20" height="20" viewBox="0 0 20 20"><rect x="4" y="5" width="12" height="10" fill="#dfe8f8" stroke="#666" stroke-width="1"/><rect x="1.2" y="2.2" width="3.6" height="3.6" fill="#40c030"/><rect x="15.2" y="2.2" width="3.6" height="3.6" fill="#40c030"/><rect x="1.2" y="14.2" width="3.6" height="3.6" fill="#40c030"/><rect x="15.2" y="14.2" width="3.6" height="3.6" fill="#40c030"/></svg>
<svg class="abs" style="left:34px;top:159px" width="20" height="20" viewBox="0 0 20 20"><path d="M10 4 Q3 2 3 8 Q4 14 12 12 Q18 12 16 17 Q13 20 9 16" fill="none" stroke="#3a70d8" stroke-width="1.5"/><g transform="translate(0,0)"><path d="M3 17 L5 12 L15 2 L18 5 L8 15Z" fill="#e0a848" stroke="#7a5010" stroke-width=".8"/><path d="M15 2 L18 5 L17 6 L14 3Z" fill="#e03030"/><path d="M3 17 L5 12 L8 15Z" fill="#f0d8a8"/></g></svg>
<svg class="abs" style="left:48px;top:159px" width="6" height="3" viewBox="0 0 6 3"><path d="M0 0 h6 l-3 3z" fill="#000"/></svg>
<svg class="abs" style="left:7px;top:185px" width="20" height="20" viewBox="0 0 20 20"><g transform="translate(8,8) scale(0.7)"><path d="M1 4 L8 1 L15 4 L8 7Z" fill="#e0e0e0"/><path d="M1 4 L8 7 V15 L1 12Z" fill="#8a8a8a"/><path d="M15 4 L8 7 V15 L15 12Z" fill="#5f5f5f"/><path d="M8 1 L15 4 L15 12 L8 15 L1 12 L1 4Z M1 4 L8 7 L15 4 M8 7V15" fill="none" stroke="#333" stroke-width=".8"/></g><g transform="translate(0,1) scale(0.8)"><path d="M6 12 L1 18" stroke="#8a8a8a" stroke-width="3" stroke-linecap="round"/><circle cx="10" cy="8" r="6" fill="#c8d8ee" stroke="#6f8fb8" stroke-width="1.6"/><circle cx="9" cy="7" r="3" fill="#e8f0fa"/></g><path d="M1 2 H5 M3 0 V4 M1 6 H5" stroke="#111" stroke-width=".9"/></svg>
<svg class="abs" style="left:34px;top:185px" width="20" height="20" viewBox="0 0 20 20"><path d="M2 3 H16 V10 H12 V17 H2Z" fill="none" stroke="#f0e010" stroke-width="1.6"/><path d="M4 10 L8 14 L15 5" stroke="#40c030" stroke-width="2.6" fill="none"/></svg>
<svg class="abs" style="left:21px;top:185px" width="6" height="3" viewBox="0 0 6 3"><path d="M0 0 h6 l-3 3z" fill="#000"/></svg>
<svg class="abs" style="left:48px;top:185px" width="6" height="3" viewBox="0 0 6 3"><path d="M0 0 h6 l-3 3z" fill="#000"/></svg>
<svg class="abs" style="left:7px;top:211px" width="20" height="20" viewBox="0 0 20 20"><path d="M1 11 L10 6 L19 10 L19 15 L10 19 L1 15Z" fill="#e8ecf4" stroke="#889" stroke-width=".7"/><path d="M5 14 V2" stroke="#2070f0" stroke-width="1.8"/><path d="M5 2 L3 5 H7Z" fill="#2070f0"/><path d="M5 14 L15 8" stroke="#30b030" stroke-width="1.8"/><path d="M5 14 L12 19" stroke="#e03030" stroke-width="1.8"/><circle cx="5" cy="14" r="1.8" fill="#999" stroke="#333" stroke-width=".5"/></svg>
<svg class="abs" style="left:34px;top:211px" width="20" height="20" viewBox="0 0 20 20"><path d="M3 17 Q1 4 6 4 Q10 4 11 11 Q12 19 17 16" fill="none" stroke="#3a70d8" stroke-width="1.5"/><g transform="translate(0,0)"><path d="M3 17 L5 12 L15 2 L18 5 L8 15Z" fill="#e0a848" stroke="#7a5010" stroke-width=".8"/><path d="M15 2 L18 5 L17 6 L14 3Z" fill="#e03030"/><path d="M3 17 L5 12 L8 15Z" fill="#f0d8a8"/></g></svg>
<svg class="abs" style="left:21px;top:211px" width="6" height="3" viewBox="0 0 6 3"><path d="M0 0 h6 l-3 3z" fill="#000"/></svg>
<svg class="abs" style="left:48px;top:211px" width="6" height="3" viewBox="0 0 6 3"><path d="M0 0 h6 l-3 3z" fill="#000"/></svg>
<svg class="abs" style="left:7px;top:237px" width="20" height="20" viewBox="0 0 20 20"><path d="M2 3 H11 L14 6 H3Z" fill="#8a9cf0"/><path d="M2 6 H12 L13 9 H3Z" fill="#f0f0f0" stroke="#888" stroke-width=".6"/><path d="M2 9 H12 L13 12 H3Z" fill="#e8e8e8" stroke="#888" stroke-width=".6"/><ellipse cx="13" cy="14" rx="7" ry="4.5" fill="#c8a080" stroke="#806050" stroke-width=".8"/><circle cx="9" cy="15" r="1.8" fill="#2050e0"/><circle cx="13" cy="15.5" r="1.6" fill="#10c020"/><circle cx="16" cy="12" r="1.6" fill="#e02020"/><path d="M10 13 L19 2" stroke="#c06010" stroke-width="1.4"/></svg>
<svg class="abs" style="left:34px;top:237px" width="20" height="20" viewBox="0 0 20 20"><path d="M6 2 L19 2 L15 18 L1 18Z" fill="#a8d0f8" stroke="#2a60c8" stroke-width="1.5"/><path d="M4 10 H17 M10 2 L8 18" stroke="#f8fbff" stroke-width="1.4"/></svg>
<svg class="abs" style="left:21px;top:237px" width="6" height="3" viewBox="0 0 6 3"><path d="M0 0 h6 l-3 3z" fill="#000"/></svg>
<svg class="abs" style="left:48px;top:237px" width="6" height="3" viewBox="0 0 6 3"><path d="M0 0 h6 l-3 3z" fill="#000"/></svg>
<svg class="abs" style="left:7px;top:263px" width="20" height="20" viewBox="0 0 20 20"><path d="M3 9 Q3 3 10 3 L10 0 L15 5 L10 9 L10 6 Q6 6 5 10Z" fill="#5a8ed8" stroke="#3c6cb8" stroke-width=".6"/><path d="M17 11 Q17 17 10 17 L10 20 L5 15 L10 11 L10 14 Q14 14 15 10Z" fill="#5a8ed8" stroke="#3c6cb8" stroke-width=".6"/></svg>
<svg class="abs" style="left:34px;top:263px" width="20" height="20" viewBox="0 0 20 20"><g transform="translate(1,1) scale(1.1)"><path d="M1 4 L8 1 L15 4 L8 7Z" fill="#e0e0e0"/><path d="M1 4 L8 7 V15 L1 12Z" fill="#8a8a8a"/><path d="M15 4 L8 7 V15 L15 12Z" fill="#5f5f5f"/><path d="M8 1 L15 4 L15 12 L8 15 L1 12 L1 4Z M1 4 L8 7 L15 4 M8 7V15" fill="none" stroke="#333" stroke-width=".8"/></g></svg>
<svg class="abs" style="left:21px;top:263px" width="6" height="3" viewBox="0 0 6 3"><path d="M0 0 h6 l-3 3z" fill="#000"/></svg>
<svg class="abs" style="left:48px;top:263px" width="6" height="3" viewBox="0 0 6 3"><path d="M0 0 h6 l-3 3z" fill="#000"/></svg>
<svg class="abs" style="left:7px;top:289px" width="20" height="20" viewBox="0 0 20 20"><text x="9" y="17" font-size="19" font-weight="bold" text-anchor="middle" font-family="Liberation Sans" fill="#3a6ac8">?</text><ellipse cx="11" cy="18" rx="6" ry="1.5" fill="#8890a0" opacity=".5"/></svg>
<svg class="abs" style="left:34px;top:289px" width="20" height="20" viewBox="0 0 20 20"><path d="M2 4 V18 M18 4 V18 M2 6 H18" stroke="#555" stroke-width="1.2"/><path d="M3 6 H17" stroke="#f0d010" stroke-width="2"/><path d="M3 6 L6 4 V8Z M17 6 L14 4 V8Z" fill="#f0d010"/></svg>
<svg class="abs" style="left:21px;top:289px" width="6" height="3" viewBox="0 0 6 3"><path d="M0 0 h6 l-3 3z" fill="#000"/></svg>
<svg class="abs" style="left:48px;top:289px" width="6" height="3" viewBox="0 0 6 3"><path d="M0 0 h6 l-3 3z" fill="#000"/></svg>
<svg class="abs" style="left:7px;top:315px" width="20" height="20" viewBox="0 0 20 20"><path d="M4 5 H16 L15 18 H5Z" fill="#b8d0d8" stroke="#6a8090" stroke-width="1"/><rect x="3" y="3" width="14" height="3" fill="#90a8b8"/><rect x="7" y="0" width="6" height="4" fill="#e8d830"/></svg>
<svg class="abs" style="left:34px;top:315px" width="20" height="20" viewBox="0 0 20 20"><path d="M16 18 Q19 8 8 8 L8 4 L2 10 L8 15 L8 11 Q14 11 16 18Z" fill="#a8a8a8" stroke="#808080" stroke-width=".6"/></svg>
<svg class="abs" style="left:21px;top:315px" width="6" height="3" viewBox="0 0 6 3"><path d="M0 0 h6 l-3 3z" fill="#000"/></svg>
<svg class="abs" style="left:48px;top:315px" width="6" height="3" viewBox="0 0 6 3"><path d="M0 0 h6 l-3 3z" fill="#000"/></svg>
<svg class="abs" style="left:7px;top:341px" width="20" height="20" viewBox="0 0 20 20"><path d="M3 1 V19 M6 1 V19" stroke="#7a6040" stroke-width="1.2"/><circle cx="11" cy="11" r="6" fill="none" stroke="#f07818" stroke-width="1.8"/><path d="M11 3 V19 M3 11 H19 M5 5 L17 17 M17 5 L5 17" stroke="#f07818" stroke-width="1.4"/><path d="M1 16 L15 19" stroke="#f07818" stroke-width="2"/></svg>
<svg class="abs" style="left:34px;top:341px" width="20" height="20" viewBox="0 0 20 20"><rect x="3" y="9" width="16" height="10" fill="#fff" stroke="#333" stroke-width="1"/><path d="M1 4 H7 L9 6 H16 L14 14 H1Z" fill="#f0c860" stroke="#a08040" stroke-width=".6"/><path d="M7 9 Q9 3 14 4 L14 2 L18 5 L14 8 L14 6 Q10 6 7 9Z" fill="#30b030"/></svg>
<svg class="abs" style="left:21px;top:341px" width="6" height="3" viewBox="0 0 6 3"><path d="M0 0 h6 l-3 3z" fill="#000"/></svg>
<svg class="abs" style="left:48px;top:341px" width="6" height="3" viewBox="0 0 6 3"><path d="M0 0 h6 l-3 3z" fill="#000"/></svg>
<div class="abs" style="left:60px;top:109px;width:1860px;height:892px;background:linear-gradient(#030318 0%,#0b102a 15.6%,#223252 49.2%,#2e4364 66%,#3a5578 82.8%,#46638b 100%)"></div>
<svg class="abs" style="left:0;top:0" width="1920" height="1048" viewBox="0 0 1920 1048"><defs>
<linearGradient id="ring" x1="916" x2="1360" gradientUnits="userSpaceOnUse"><stop offset="0" stop-color="#6e6e6e"/><stop offset=".55" stop-color="#585858"/><stop offset=".86" stop-color="#303030"/><stop offset="1" stop-color="#2c2c2c"/></linearGradient><linearGradient id="e1g" x1="950" x2="1295" gradientUnits="userSpaceOnUse"><stop offset="0" stop-color="#585858"/><stop offset=".25" stop-color="#707070"/><stop offset=".6" stop-color="#868686"/><stop offset="1" stop-color="#828282"/></linearGradient>
<linearGradient id="fl1" x1="975" y1="645" x2="1030" y2="675" gradientUnits="userSpaceOnUse"><stop offset="0" stop-color="#3a3a3a"/><stop offset=".4" stop-color="#c8c8c8"/><stop offset=".6" stop-color="#8a8a8a"/><stop offset="1" stop-color="#9a9a9a"/></linearGradient>
<linearGradient id="fl2" x1="1136" x2="1176" gradientUnits="userSpaceOnUse"><stop offset="0" stop-color="#505050"/><stop offset=".55" stop-color="#a0a0a0"/><stop offset=".75" stop-color="#d0d0d0"/><stop offset="1" stop-color="#8a8a8a"/></linearGradient>
<linearGradient id="flface" x1="1180" y1="600" x2="1230" y2="650" gradientUnits="userSpaceOnUse"><stop offset="0" stop-color="#8a8a8a"/><stop offset=".6" stop-color="#b4b4b4"/><stop offset="1" stop-color="#9a9a9a"/></linearGradient><linearGradient id="fl2top" x1="1144" x2="1187" gradientUnits="userSpaceOnUse"><stop offset="0" stop-color="#4a4a4a"/><stop offset=".7" stop-color="#8a8a8a"/><stop offset="1" stop-color="#7a7a7a"/></linearGradient>
<linearGradient id="bolt" x1="1063" x2="1188" gradientUnits="userSpaceOnUse"><stop offset="0" stop-color="#a8a8b8"/><stop offset=".35" stop-color="#e8e8f4"/><stop offset=".75" stop-color="#a0a0b0"/><stop offset="1" stop-color="#6a6a76"/></linearGradient>
<linearGradient id="bowl" x1="1004" x2="1247" gradientUnits="userSpaceOnUse"><stop offset="0" stop-color="#2a2a2a"/><stop offset=".45" stop-color="#3c3c3c"/><stop offset="1" stop-color="#6c6c6c"/></linearGradient>
<linearGradient id="e1b" x1="987" x2="1260" gradientUnits="userSpaceOnUse"><stop offset="0" stop-color="#505050"/><stop offset=".5" stop-color="#6a6a6a"/><stop offset="1" stop-color="#7a7a7a"/></linearGradient>
<linearGradient id="band" x1="906" x2="1356" gradientUnits="userSpaceOnUse"><stop offset="0" stop-color="#585858"/><stop offset=".4" stop-color="#464646"/><stop offset="1" stop-color="#2e2e2e"/></linearGradient>
<linearGradient id="fl1top" x1="998" x2="1040" gradientUnits="userSpaceOnUse"><stop offset="0" stop-color="#3a3a3a"/><stop offset=".6" stop-color="#6a6a6a"/><stop offset="1" stop-color="#747474"/></linearGradient>
<linearGradient id="tooth" x1="0" x2="1"><stop offset="0" stop-color="#e0e0ec"/><stop offset="1" stop-color="#9898a8"/></linearGradient>
<linearGradient id="fl3" x1="1297" x2="1345" gradientUnits="userSpaceOnUse"><stop offset="0" stop-color="#505050"/><stop offset=".35" stop-color="#b8b8b8"/><stop offset="1" stop-color="#8a8a8a"/></linearGradient>
<linearGradient id="pock" x1="0" x2="1"><stop offset="0" stop-color="#3a3a3a"/><stop offset="1" stop-color="#707070"/></linearGradient>
<linearGradient id="lrface" x1="1320" y1="550" x2="1350" y2="600" gradientUnits="userSpaceOnUse"><stop offset="0" stop-color="#5a5a5a"/><stop offset="1" stop-color="#8a8a8a"/></linearGradient>
<clipPath id="e1clip"><ellipse cx="1122.5" cy="430.5" rx="173" ry="71.5" transform="rotate(-4.5 1122.5 430.5)"/></clipPath>
</defs><path d="M1018.5 740 L1023.5 761 Q1040 760 1053 750 L1050 744Z" fill="url(#tooth)" stroke="#000" stroke-width="0.8" stroke-linejoin="round" /><path d="M1240 730 Q1246 738 1253 739.5 L1274 740 L1275 724Z" fill="url(#tooth)" stroke="#000" stroke-width="0.8" stroke-linejoin="round" /><path d="M1093.7 323.7 L1119.0 324.4 L1120.4 326.4 L1138.0 326.8 L1190.0 326.5 L1214.0 357.0 L1240.0 360.5 L1247.0 357.0 L1289.0 335.0 L1305.0 345.0 L1341.0 364.0 L1348.0 400.0 L1319.0 404.0 L1321.6 404.4 L1381.0 399.0 L1385.0 402.0 L1389.7 456.0 L1386.0 464.0 L1386.6 501.0 L1380.0 520.0 L1356.0 584.0 L1360.0 589.0 L1360.0 656.0 L1321.0 696.0 L1249.0 733.0 L1160.0 752.0 L1090.0 751.8 L1022.0 745.0 L963.5 724.3 L934.0 705.0 L924.6 692.0 L924.6 666.0 L918.0 639.6 L916.5 620.5 L912.2 613.0 L911.7 604.3 L904.5 590.0 L898.0 576.0 L876.0 540.0 L865.0 510.0 L862.0 456.0 L869.0 444.0 L874.0 424.0 L927.0 413.0 L920.0 374.0 L944.0 368.0 L957.0 364.0 L987.0 352.0 L999.0 354.0 L1039.0 359.0 L1058.0 361.0 L1076.0 360.0 L1092.0 355.0 L1096.0 352.0Z" fill="#444" stroke="#000" stroke-width="1.2" stroke-linejoin="round" /><path d="M916.5 621.5 C930 637 955 654 995 668 C1030 676 1090 680 1160 679 C1230 676 1300 650 1340 614 L1356 593 L1360 589 L1360 656 C1330 700 1250 745 1160 752 C1070 756 960 745 924.6 692 L924.6 666 Z" fill="url(#ring)" stroke="#000" stroke-width="1" stroke-linejoin="round" /><path d="M917 624.4 C930 645 960 665 995 676.8 C1030 686 1090 692 1160 690 C1230 686 1300 660 1340 623 L1358 600" fill="none" stroke="#111" stroke-width="0.9" stroke-linejoin="round" /><path d="M906 578 L960 598 C1000 610 1040 616 1066 616 L1149 614 C1200 610 1240 600 1256 593 L1319 567 L1359 577 L1356 593 L1340 614 C1300 650 1230 676 1160 679 C1090 680 1030 676 995 668 C955 654 930 637 916.5 621.5 L911.5 609 L906 582Z" fill="url(#band)" stroke="#000" stroke-width="1" stroke-linejoin="round" /><path d="M906 586 L960 605 M1066 622 L1149 620 M1256 599 L1316 574" fill="none" stroke="#1a1a1a" stroke-width="0.7" stroke-linejoin="round" /><path d="M862.6 456.0 L918.0 455.0 L919.0 487.0 L905.0 497.0 L864.0 513.0Z" fill="#595959" stroke="#000" stroke-width="1" stroke-linejoin="round" /><path d="M864.0 513.0 L905.0 497.0 L913.0 496.0 L974.0 497.0 L959.0 516.0 L960.0 602.0 L906.0 578.0 L898.0 576.0 L876.0 540.0 L865.0 510.0Z" fill="#6a6a6a" stroke="#000" stroke-width="1" stroke-linejoin="round" /><path d="M898.0 576.0 L906.0 578.0 L912.0 612.0 L911.5 609.0Z" fill="#8a8a8a" stroke="#000" stroke-width="0.6" stroke-linejoin="round" /><path d="M959 516 L1001 503.5 L999 550 C996 580 990 610 974 637 L972 638 C966 620 962 610 960 602Z" fill="#2e2e2e" stroke="#000" stroke-width="1" stroke-linejoin="round" /><path d="M1001 503.5 L1005 502 L1040 506 L1038 560 C1036 590 1045 615 1062 630 C1040 648 1020 660 1004 668 C990 664 980 655 975 642 C990 610 996 580 999 550Z" fill="url(#fl1)" stroke="#000" stroke-width="1" stroke-linejoin="round" /><path d="M1001 503.5 L1040 506 L1038 560 L1036 592 C1020 588 1005 600 993 622 C996 590 999 560 999 550Z" fill="url(#fl1top)" stroke="none" stroke-width="0" stroke-linejoin="round" /><path d="M1036 592 C1020 588 1005 600 996 618 M990 624 L1046 642 M1036 590 L1060 630" fill="none" stroke="#111" stroke-width="0.7" stroke-linejoin="round" /><path d="M1040.0 506.0 L1064.0 531.0 L1066.0 536.0 L1149.0 537.0 L1149.0 614.0 L1066.0 616.0 L1062.0 630.0 L1045.0 615.0 L1036.0 590.0 L1038.0 560.0Z" fill="#646464" stroke="#000" stroke-width="1" stroke-linejoin="round" /><path d="M1040.0 506.0 L1123.0 511.0 L1149.0 507.0 L1149.0 537.0 L1066.0 536.0 L1064.0 531.0Z" fill="#5e5e5e" stroke="#000" stroke-width="0.8" stroke-linejoin="round" /><path d="M1187.0 502.0 L1256.0 511.0 L1256.0 593.0 L1248.0 611.0 L1176.5 589.0Z" fill="#6e6e6e" stroke="#000" stroke-width="1" stroke-linejoin="round" /><path d="M1176.5 589 L1248 611 C1235 630 1210 650 1170 672Z" fill="url(#flface)" stroke="#000" stroke-width="1" stroke-linejoin="round" /><path d="M1172 640 L1240 622" fill="none" stroke="#111" stroke-width="0.6" stroke-linejoin="round" /><path d="M1151 507 Q1168 500 1187 502 L1176.5 589 L1170 672 Q1160 678 1153 675 Q1136 668 1135.5 655 L1144 589Z" fill="url(#fl2)" stroke="#000" stroke-width="1" stroke-linejoin="round" /><path d="M1151 507 Q1168 500 1187 502 L1176.5 589 Q1160 583 1144 589Z" fill="url(#fl2top)" stroke="none" stroke-width="0" stroke-linejoin="round" /><path d="M1144 589 Q1160 583 1176.5 589 M1137 648 Q1155 642 1172 647" fill="none" stroke="#111" stroke-width="0.6" stroke-linejoin="round" /><path d="M1256.0 511.0 L1302.6 495.0 L1302.6 540.8 L1319.4 545.3 L1319.4 566.7 L1256.0 592.0Z" fill="#3c3c3c" stroke="#000" stroke-width="1" stroke-linejoin="round" /><path d="M1295.0 454.5 L1369.8 440.0 L1377.4 521.0 L1369.8 542.3 L1319.4 545.3 L1324.0 482.7 L1295.0 469.0Z" fill="#5c5c5c" stroke="#000" stroke-width="1" stroke-linejoin="round" /><path d="M1369.8 440.0 L1386.0 438.0 L1386.6 501.0 L1377.4 521.0Z" fill="#383838" stroke="#000" stroke-width="1" stroke-linejoin="round" /><path d="M1319.5 545.0 L1368.0 542.0 L1353.0 575.0 L1338.0 600.0 L1308.0 600.0 L1319.5 568.0Z" fill="url(#lrface)" stroke="#000" stroke-width="1" stroke-linejoin="round" /><path d="M1318 600 L1345 589" fill="none" stroke="#111" stroke-width="0.7" stroke-linejoin="round" /><path d="M1308 600 L1338 600 L1347 588 C1338 608 1328 624 1314 634 C1304 637 1297 628 1297 614 Z" fill="url(#fl3)" stroke="#000" stroke-width="0.9" stroke-linejoin="round" /><path d="M1300 612 L1320 602 M1312 603 L1322 626" fill="none" stroke="#111" stroke-width="0.6" stroke-linejoin="round" /><path d="M920 374 L944 368 L957 364 L987 352 L999 354 L1039 359 L1058 361 L1076 360 L1092 355 L1096 352 L1096 340 L1120 326 L1190 326.5 L1214 357 L1240 360.5 L1247 357 L1272 363 L1312 386 Q1300 396 1305 400 L1318 405 L1324 418 Q1318 432 1313 450 L1295 454 Q1280 458 1278 466 L1266 478 L1256 485 L1256 511 L1187 502 L1151 507 L1123 511 L1040 506 L1005 502 L974 497 L913 496 L919 487 Q935 478 943 464 L918 455 L922 445 L870 441 L875 424 L931 412 Q955 408 962 398 L968 388 Z" fill="#777" stroke="#000" stroke-width="1" stroke-linejoin="round" /><path d="M920.6 373.7 L968.0 389.8 L961.0 398.0 L958.0 404.0 L937.0 410.0 L927.0 411.0Z" fill="#686868" stroke="#000" stroke-width="1" stroke-linejoin="round" /><path d="M1097 352.5 L1120 348 L1182 347 L1205 348.5 M1138 330 L1192 330.5" fill="none" stroke="#111" stroke-width="0.9" stroke-linejoin="round" /><path d="M1138.0 326.8 L1190.0 326.5 L1193.0 330.5 L1138.0 330.0Z" fill="#888" stroke="#000" stroke-width="0.6" stroke-linejoin="round" /><path d="M918 455 Q940 458 943 464 Q935 478 919 487Z" fill="url(#pock)" stroke="#000" stroke-width="0.8" stroke-linejoin="round" /><path d="M961 398 Q968 392 968 388 L962 390 Q958 396 961 398Z" fill="#555" stroke="#000" stroke-width="0.6" stroke-linejoin="round" /><path d="M1311.9 385.6 L1341.8 363.6 L1347.3 400.6 L1318.2 405.3 Q1300 404 1304 396 Q1305 392 1311.9 385.6Z" fill="#333" stroke="#000" stroke-width="1" stroke-linejoin="round" /><path d="M1278 466 Q1280 456 1295 454.5 L1295 469Z" fill="#3a3a3a" stroke="#000" stroke-width="0.8" stroke-linejoin="round" /><path d="M957.0 364.0 L987.0 352.0 L1039.0 359.0 L989.5 375.0Z" fill="#7a7a7a" stroke="#000" stroke-width="0.8" stroke-linejoin="round" /><path d="M1313.5 350.0 L1341.8 363.6 L1311.9 385.6 L1285.0 368.3Z" fill="#767676" stroke="#000" stroke-width="0.8" stroke-linejoin="round" /><path d="M1327.6 424 L1373 420 L1368.6 440.7 L1313.5 450 Q1318 435 1327.6 424Z" fill="#7a7a7a" stroke="#000" stroke-width="0.8" stroke-linejoin="round" /><path d="M870.0 441.0 L875.0 424.0 L931.0 412.0 L920.0 433.0 L917.6 438.0Z" fill="#7a7a7a" stroke="#000" stroke-width="0.8" stroke-linejoin="round" /><g transform="rotate(-4.5 1122.5 430.5)"><ellipse cx="1122.5" cy="430.5" rx="173" ry="71.5" fill="url(#e1g)" stroke="#000" stroke-width="1"/></g><g clip-path="url(#e1clip)"><g transform="rotate(-3.6 1124 448.5)"><ellipse cx="1124" cy="448.5" rx="136.3" ry="54.5" fill="url(#e1b)" stroke="#000" stroke-width="1"/></g><g transform="rotate(-3.5 1125.5 455.5)"><ellipse cx="1125.5" cy="455.5" rx="121.7" ry="53.5" fill="url(#bowl)" stroke="#000" stroke-width="1"/><ellipse cx="1125.5" cy="455.5" rx="117.5" ry="50" fill="none" stroke="#000" stroke-width=".8"/><path d="M1035 418 A119 51.5 0 0 1 1215 418" fill="none" stroke="#d8d8d8" stroke-width="1.6" opacity=".8"/></g><ellipse cx="1126" cy="489" rx="91" ry="16" fill="#d4d4e0"/><path d="M1063.5 456 L1066 505 Q1128 515 1188 495 L1186 448Z" fill="url(#bolt)" stroke="#000" stroke-width="1" stroke-linejoin="round" /></g><g transform="rotate(-4.5 1122.5 430.5)"><path d="M949.5 430.5 A173 71.5 0 0 0 1295.5 430.5" fill="none" stroke="#000" stroke-width="1"/></g><path d="M1000 482 C1040 498 1080 503 1110 503.5 C1180 503 1240 494 1290 476" fill="none" stroke="#111" stroke-width="0.7" stroke-linejoin="round" /><g transform="rotate(-4 1124.5 450)"><ellipse cx="1124.5" cy="450" rx="61" ry="26.5" fill="#c0c0ce" stroke="#000" stroke-width="1"/><ellipse cx="1127" cy="446" rx="56" ry="21.5" fill="#b8b8c8" stroke="#000" stroke-width=".8"/></g><path d="M1070 462 Q1125 490 1185 458" fill="none" stroke="#f4f4fc" stroke-width="2.5" stroke-linejoin="round" opacity=".8"/><path d="M1090.8 442.5 L1117.5 431.7 L1151.7 435.0 L1157.5 448.3 L1130.8 459.0 L1103.0 457.5 L1095.8 455.8Z" fill="#6a6a78" stroke="#000" stroke-width="1" stroke-linejoin="round" /><path d="M1117.5 431.7 L1151.7 435.0 L1157.5 448.3 L1130.8 459.0 L1118.0 458.0Z" fill="#a4a4b4" stroke="#000" stroke-width="0.8" stroke-linejoin="round" /><path d="M1093.7 323.7 L1119.0 324.4 L1120.4 348.0 L1096.0 352.0Z" fill="#7a7636" stroke="#000" stroke-width="1" stroke-linejoin="round" /><path d="M1120.4 326.4 L1138.0 326.8 L1140.0 345.0 L1122.0 348.0Z" fill="#a6a690" stroke="#000" stroke-width="1" stroke-linejoin="round" /><path d="M920.6 373.7 L946.6 367.6 L980.2 381.4 L968.0 389.8Z" fill="#7a7636" stroke="#000" stroke-width="1" stroke-linejoin="round" /><path d="M946.6 367.6 L961.9 364.6 L989.4 375.3 L980.2 381.4Z" fill="#a6a690" stroke="#000" stroke-width="1" stroke-linejoin="round" /><path d="M1246.5 358.0 L1289.0 335.2 L1305.6 344.7 L1272.5 363.6Z" fill="#7a7636" stroke="#000" stroke-width="1" stroke-linejoin="round" /><path d="M1305.6 344.7 L1313.5 350.2 L1283.5 367.5 L1272.5 363.6Z" fill="#a6a690" stroke="#000" stroke-width="1" stroke-linejoin="round" /><path d="M1318.2 405.3 L1381.2 399.0 L1385.0 402.2 L1378.0 413.2 L1324.5 417.9Z" fill="#7a7636" stroke="#000" stroke-width="1" stroke-linejoin="round" /><path d="M1324.5 417.9 L1378.0 413.2 L1373.3 420.3 L1327.6 424.2Z" fill="#a6a690" stroke="#000" stroke-width="1" stroke-linejoin="round" /><path d="M1385.0 402.2 L1389.0 455.7 L1382.8 463.6 L1376.5 416.3 L1378.0 413.2Z" fill="#57531f" stroke="#000" stroke-width="1" stroke-linejoin="round" /><path d="M864.2 451.6 L878.0 447.0 L922.2 445.5 L925.2 450.0 L878.0 455.4 L862.6 456.2Z" fill="#7a7636" stroke="#000" stroke-width="1" stroke-linejoin="round" /><path d="M870.3 441.0 L917.6 437.9 L922.2 445.5 L878.0 447.0Z" fill="#a6a690" stroke="#000" stroke-width="1" stroke-linejoin="round" /><path d="M948.0 515.0 L979.0 499.0 L1005.0 501.5 L1001.0 503.5 L960.0 516.0 L959.0 577.0 L945.0 565.0 L945.0 515.0Z" fill="#7a7636" stroke="#000" stroke-width="1" stroke-linejoin="round" /><path d="M945 555 L959 562" fill="none" stroke="#111" stroke-width="0.7" stroke-linejoin="round" /><path d="M937.5 513.0 L967.0 497.5 L979.0 499.0 L950.0 514.0Z" fill="#a6a690" stroke="#000" stroke-width="1" stroke-linejoin="round" /><path d="M925 501 L937.5 513 M945 485 L967 497.5" fill="none" stroke="#111" stroke-width="0.8" stroke-linejoin="round" /><path d="M1123.0 511.5 L1149.0 507.0 L1150.0 541.0 L1144.0 589.0 L1122.0 583.0 L1121.0 574.5Z" fill="#7a7636" stroke="#000" stroke-width="1" stroke-linejoin="round" /><path d="M1112.0 513.0 L1123.0 511.5 L1121.0 548.0 L1114.0 545.0Z" fill="#a6a690" stroke="#000" stroke-width="1" stroke-linejoin="round" /><path d="M1266.0 478.2 L1281.2 468.2 L1325.5 481.2 L1304.0 490.4Z" fill="#7a7636" stroke="#000" stroke-width="1" stroke-linejoin="round" /><path d="M1256.8 485.0 L1266.0 478.0 L1304.0 490.0 L1290.4 495.7Z" fill="#a6a690" stroke="#000" stroke-width="1" stroke-linejoin="round" /><path d="M1304.0 490.4 L1325.5 481.2 L1324.7 542.3 L1302.6 540.8Z" fill="#57531f" stroke="#000" stroke-width="1" stroke-linejoin="round" /><circle cx="897.5" cy="483" r="10" fill="#6a6a5e" stroke="#111" stroke-width="1"/><circle cx="897.5" cy="483" r="6.5" fill="#555" stroke="#bbb" stroke-width=".8"/><path d="M893 480 L897.5 478 L902 480 L902 486 L897.5 488 L893 486Z" fill="none" stroke="#ddd" stroke-width=".7"/><circle cx="943" cy="406" r="6" fill="#6a6a5e" stroke="#111" stroke-width="1"/><circle cx="943" cy="406" r="3.5" fill="#333"/><ellipse cx="984" cy="543" rx="9" ry="10" fill="#3c3c38" stroke="#111" stroke-width="1"/><ellipse cx="984.5" cy="543" rx="6.5" ry="7.5" fill="#262624" stroke="#8a8a80" stroke-width=".8"/><circle cx="985.5" cy="540.5" r="1" fill="#ddd"/><circle cx="982.5" cy="545" r="1" fill="#ddd"/><defs><linearGradient id="wm" x1="0" y1="0" x2="0" y2="1"><stop offset="0" stop-color="#f06818"/><stop offset="1" stop-color="#f8a820"/></linearGradient></defs><g fill="none" stroke="url(#wm)" stroke-width="2.2" stroke-linecap="butt"><path d="M892 517 V535 Q893 538.5 906 539"/><path d="M897.5 512 V532 Q898 535.5 907 537"/><path d="M903 508 V529 Q904 533 909 535"/><path d="M936 517 V535 Q935 538.5 922 539"/><path d="M930.5 512 V532 Q930 535.5 921 537"/><path d="M925 508 V529 Q924 533 919 535"/><path d="M907 539 H921" stroke="#f05020" stroke-width="2.5"/></g><path d="M906 523 Q905 512 915 510 Q909 515 911 522 L914 531 Q920 525 916 518 Q923 522 921 531 Q917 538 911 536 Q906 531 906 523Z" fill="url(#wm)"/><text x="947" y="529.5" font-size="16.5" fill="#f07a20" stroke="#f07a20" stroke-width=".3" font-family="Liberation Sans">智造资料网</text><text x="947" y="538" font-size="4.5" fill="#f08020" font-family="Liberation Sans" textLength="82">INTELLIGENT MANUFACTURING DATA</text></svg>
<div class="abs" style="left:64px;top:113px;width:24px;height:24px;background:#7e8096"></div>
<svg class="abs" style="left:66px;top:115px" width="20" height="20" viewBox="0 0 20 20"><rect x="2" y="3" width="16" height="3" rx="1" fill="#3f5a8a"/><rect x="2" y="8.5" width="16" height="3" rx="1" fill="#3f5a8a"/><rect x="2" y="14" width="16" height="3" rx="1" fill="#3f5a8a"/></svg>
<div class="abs" style="left:92px;top:113px;width:24px;height:24px;background:#7e8096"></div>
<svg class="abs" style="left:94px;top:115px" width="20" height="20" viewBox="0 0 20 20"><rect x="5" y="5" width="10" height="10" fill="#dfe8f8" stroke="#555" stroke-width=".8"/><rect x="2.2" y="2.2" width="3.6" height="3.6" fill="#40c030"/><rect x="14.2" y="2.2" width="3.6" height="3.6" fill="#40c030"/><rect x="2.2" y="14.2" width="3.6" height="3.6" fill="#40c030"/><rect x="14.2" y="14.2" width="3.6" height="3.6" fill="#40c030"/></svg>
<div class="abs" style="left:120px;top:113px;width:24px;height:24px;background:#7e8096"></div>
<svg class="abs" style="left:122px;top:115px" width="20" height="20" viewBox="0 0 20 20"><path d="M1 5 L6 8 M1 9 L6 11 M2 13 L6 13" stroke="#b0b0b0" stroke-width="1.5"/><g transform="translate(2,0) scale(0.9)"><path d="M6 12 L1 18" stroke="#8a8a8a" stroke-width="3" stroke-linecap="round"/><circle cx="10" cy="8" r="6" fill="#c8d8ee" stroke="#6f8fb8" stroke-width="1.6"/><circle cx="9" cy="7" r="3" fill="#e8f0fa"/></g></svg>
<div class="abs" style="left:148px;top:113px;width:24px;height:24px;background:#7e8096"></div>
<svg class="abs" style="left:150px;top:115px" width="20" height="20" viewBox="0 0 20 20"><path d="M1 12 L10 5 L19 12 L10 19Z" fill="none" stroke="#666" stroke-width=".5"/><path d="M10 12 V1" stroke="#2070f0" stroke-width="1.8"/><path d="M10 12 L17 7" stroke="#30b030" stroke-width="1.8"/><path d="M10 12 L16 18" stroke="#e03030" stroke-width="1.8"/><circle cx="10" cy="12" r="1.6" fill="#ddd"/></svg>
<div class="abs" style="left:176px;top:113px;width:24px;height:24px;background:#7e8096"></div>
<svg class="abs" style="left:178px;top:115px" width="20" height="20" viewBox="0 0 20 20"><g transform="translate(0.5,0) scale(1.22)" fill="none" stroke="#111" stroke-linejoin="round"><path d="M8 1 V9 M1 12 L8 9 L15 12" stroke-width=".8"/><path d="M1 4 L8 1 L15 4 L8 7Z" fill="#40d030" stroke="none"/><path d="M8 1 L15 4 L15 12 L8 15 L1 12 L1 4Z M1 4 L8 7 L15 4 M8 7 V15" stroke-width=".9"/></g></svg>
<div class="abs" style="left:204px;top:113px;width:24px;height:24px;background:#7e8096"></div>
<svg class="abs" style="left:206px;top:115px" width="20" height="20" viewBox="0 0 20 20"><g transform="translate(0.5,0) scale(1.22)" fill="none" stroke="#111" stroke-linejoin="round"><path d="M8 1 V9 M1 12 L8 9 L15 12" stroke-width=".8"/><path d="M1 12 L8 9 L15 12 L8 15Z" fill="#40d030" stroke="none"/><path d="M8 1 L15 4 L15 12 L8 15 L1 12 L1 4Z M1 4 L8 7 L15 4 M8 7 V15" stroke-width=".9"/></g></svg>
<div class="abs" style="left:232px;top:113px;width:24px;height:24px;background:#7e8096"></div>
<svg class="abs" style="left:234px;top:115px" width="20" height="20" viewBox="0 0 20 20"><g transform="translate(0.5,0) scale(1.22)" fill="none" stroke="#111" stroke-linejoin="round"><path d="M8 1 V9 M1 12 L8 9 L15 12" stroke-width=".8"/><path d="M1 4 L8 1 V9 L1 12Z" fill="#40d030" stroke="none"/><path d="M8 1 L15 4 L15 12 L8 15 L1 12 L1 4Z M1 4 L8 7 L15 4 M8 7 V15" stroke-width=".9"/></g></svg>
<div class="abs" style="left:260px;top:113px;width:24px;height:24px;background:#7e8096"></div>
<svg class="abs" style="left:262px;top:115px" width="20" height="20" viewBox="0 0 20 20"><g transform="translate(0.5,0) scale(1.22)" fill="none" stroke="#111" stroke-linejoin="round"><path d="M8 1 V9 M1 12 L8 9 L15 12" stroke-width=".8"/><path d="M15 4 L8 7 V15 L15 12Z" fill="#40d030" stroke="none"/><path d="M8 1 L15 4 L15 12 L8 15 L1 12 L1 4Z M1 4 L8 7 L15 4 M8 7 V15" stroke-width=".9"/></g></svg>
<div class="abs" style="left:288px;top:113px;width:24px;height:24px;background:#7e8096"></div>
<svg class="abs" style="left:290px;top:115px" width="20" height="20" viewBox="0 0 20 20"><g transform="translate(0.5,0) scale(1.22)" fill="none" stroke="#111" stroke-linejoin="round"><path d="M8 1 V9 M1 12 L8 9 L15 12" stroke-width=".8"/><path d="M1 4 L8 7 V15 L1 12Z" fill="#40d030" stroke="none"/><path d="M8 1 L15 4 L15 12 L8 15 L1 12 L1 4Z M1 4 L8 7 L15 4 M8 7 V15" stroke-width=".9"/></g></svg>
<div class="abs" style="left:316px;top:113px;width:24px;height:24px;background:#7e8096"></div>
<svg class="abs" style="left:318px;top:115px" width="20" height="20" viewBox="0 0 20 20"><g transform="translate(0.5,0) scale(1.22)" fill="none" stroke="#111" stroke-linejoin="round"><path d="M8 1 V9 M1 12 L8 9 L15 12" stroke-width=".8"/><path d="M8 1 L15 4 V12 L8 9Z" fill="#40d030" stroke="none"/><path d="M8 1 L15 4 L15 12 L8 15 L1 12 L1 4Z M1 4 L8 7 L15 4 M8 7 V15" stroke-width=".9"/></g></svg>
<div class="abs" style="left:344px;top:113px;width:24px;height:24px;background:#7e8096"></div>
<svg class="abs" style="left:346px;top:115px" width="20" height="20" viewBox="0 0 20 20"><g transform="translate(0,0) scale(1.25)"><path d="M1 4 L8 1 L15 4 L8 7Z" fill="#80f060"/><path d="M1 4 L8 7 V15 L1 12Z" fill="#30c020"/><path d="M15 4 L8 7 V15 L15 12Z" fill="#20a010"/></g></svg>
<div class="abs" style="left:64px;top:141px;width:24px;height:24px;background:#7e8096"></div>
<svg class="abs" style="left:66px;top:143px" width="20" height="20" viewBox="0 0 20 20"><path d="M5 4.2 V15.8 A5.0 2.2 0 0 0 15 15.8 V4.2" fill="none" stroke="#222" stroke-width="1"/><ellipse cx="10.0" cy="4.2" rx="5.0" ry="2.2" fill="none" stroke="#222" stroke-width="1"/><path d="M5 13.3 A5.0 2.2 0 0 0 15 13.3" fill="none" stroke="#222" stroke-width="0.8"/></svg>
<div class="abs" style="left:64px;top:169px;width:24px;height:24px;background:#7e8096"></div>
<svg class="abs" style="left:66px;top:171px" width="20" height="20" viewBox="0 0 20 20"><path d="M5 4.2 V15.8 A5.0 2.2 0 0 0 15 15.8 V4.2" fill="none" stroke="#222" stroke-width="1"/><ellipse cx="10.0" cy="4.2" rx="5.0" ry="2.2" fill="none" stroke="#222" stroke-width="1"/></svg>
<div class="abs" style="left:64px;top:197px;width:24px;height:24px;background:#9e9262;border:1px solid #f0d070"></div>
<svg class="abs" style="left:66px;top:199px" width="20" height="20" viewBox="0 0 20 20"><defs><linearGradient id="bcg7"><stop offset="0" stop-color="#2c4f98"/><stop offset=".45" stop-color="#8fb0e8"/><stop offset="1" stop-color="#2c4f98"/></linearGradient></defs><ellipse cx="12.0" cy="18" rx="5.0" ry="1.5" fill="#8890a0" opacity=".5"/><path d="M5 4.2 V15.8 A5.0 2.2 0 0 0 15 15.8 V4.2" fill="url(#bcg7)" stroke="#1a2e60" stroke-width="1"/><ellipse cx="10.0" cy="4.2" rx="5.0" ry="2.2" fill="#9fbfee" stroke="#1a2e60" stroke-width="1"/></svg>
<div class="abs" style="left:64px;top:225px;width:24px;height:24px;background:#7e8096"></div>
<svg class="abs" style="left:66px;top:227px" width="20" height="20" viewBox="0 0 20 20"><path d="M5 4.2 V15.8 A5.0 2.2 0 0 0 15 15.8 V4.2" fill="#dde6f4" stroke="#333" stroke-width="1"/><ellipse cx="10.0" cy="4.2" rx="5.0" ry="2.2" fill="#eef3fa" stroke="#333" stroke-width="1"/><path d="M5 13.3 A5.0 2.2 0 0 0 15 13.3" fill="none" stroke="#333" stroke-width="0.8"/></svg>
<div class="abs" style="left:64px;top:253px;width:24px;height:24px;background:#7e8096"></div>
<svg class="abs" style="left:66px;top:255px" width="20" height="20" viewBox="0 0 20 20"><path d="M5 4.2 V15.8 A5.0 2.2 0 0 0 15 15.8 V4.2" fill="none" stroke="#222" stroke-width="1"/><ellipse cx="10.0" cy="4.2" rx="5.0" ry="2.2" fill="none" stroke="#222" stroke-width="1"/><path d="M7 5 L9 17 M11 4 L8 11 L12 18 M13 5 L11 14" stroke="#222" stroke-width=".7" fill="none"/></svg>
<svg class="abs" style="left:0px;top:0px" width="1920" height="1048" viewBox="0 0 1920 1048"><path d="M122 941 L188 935.5" stroke="#20d0e0" stroke-width="2"/><path d="M185 931.5 L195 935 L185.5 938.8Z" fill="#20d0e0"/><text x="196.5" y="939.5" font-size="11" fill="#e01010" font-family="Liberation Sans">Z</text><path d="M123 942 L146 940 L147 961 L124 962Z" fill="#8898b8" opacity=".55" stroke="#d0d0d0" stroke-width=".7"/><path d="M123 951.5 L146.5 950" stroke="#d0d0d0" stroke-width=".7"/><path d="M122 956 L123 976" stroke="#e8e020" stroke-width="1.5"/><path d="M121 942 L122 950" stroke="#e01010" stroke-width="2.5"/><path d="M118.5 952 L122 947.5 L125.5 952 L122 957Z" fill="#e01010"/><path d="M119.5 975 L125.5 975 L122.5 987Z" fill="#109030"/><circle cx="121" cy="941" r="3" fill="#808080"/><text x="118.5" y="998" font-size="11" fill="#e01010" font-family="Liberation Sans">Y</text></svg>
<div class="abs" style="left:0px;top:1001px;width:1920px;height:39px;background:#d5dbe9"></div>
<div class="abs" style="left:2px;top:1020px;width:1918px;height:1px;background:#a0a4ac"></div>
<svg class="abs" style="left:1336px;top:1003px" width="4" height="16" viewBox="0 0 4 16"><rect width="4" height="16" fill="url(#dps)"/></svg>
<div class="abs" style="left:1341px;top:1003px;width:131px;height:15px;background:#fff"></div>
<svg class="abs" style="left:1458px;top:1004px" width="14" height="14" viewBox="0 0 14 14"><circle cx="8" cy="5.5" r="3.5" fill="none" stroke="#2a60c0" stroke-width="1.4"/><path d="M5.5 8 L1 12.5" stroke="#2a60c0" stroke-width="1.8"/></svg>
<svg class="abs" style="left:1475px;top:1003px" width="4" height="16" viewBox="0 0 4 16"><rect width="4" height="16" fill="url(#dps)"/></svg>
<div class="t" style="left:1486px;top:1005px;font-size:12px">绝对 XY 上视图</div>
<div class="abs" style="left:1593px;top:1004px;width:1px;height:14px;background:#a0a0a0"></div>
<div class="t" style="left:1601px;top:1005px;font-size:12px">绝对视图</div>
<svg class="abs" style="left:1659px;top:1003px" width="4" height="16" viewBox="0 0 4 16"><rect width="4" height="16" fill="url(#dps)"/></svg>
<div class="t" style="left:1668px;top:1005px;font-size:12px;font-weight:bold">LAYER0</div>
<div class="abs" style="left:1726px;top:1004px;width:1px;height:14px;background:#a0a0a0"></div>
<div class="abs" style="left:1757px;top:1004px;width:1px;height:14px;background:#a0a0a0"></div>
<div class="abs" style="left:1800px;top:1004px;width:1px;height:14px;background:#a0a0a0"></div>
<div class="abs" style="left:1843px;top:1004px;width:1px;height:14px;background:#a0a0a0"></div>
<div class="abs" style="left:1886px;top:1004px;width:1px;height:14px;background:#a0a0a0"></div>
<div class="abs" style="left:1762px;top:1005px;width:32px;height:12px;background:#46628e"></div>
<div class="abs" style="left:1805px;top:1005px;width:32px;height:12px;background:#46628e"></div>
<div class="abs" style="left:1848px;top:1005px;width:32px;height:12px;background:#46628e"></div>
<svg class="abs" style="left:1893px;top:1003px" width="15" height="15" viewBox="0 0 15 15"><circle cx="7.5" cy="7.5" r="6.5" fill="#2050c0"/><path d="M3 4 Q6 2 8 5 Q6 8 4 7Z M9 9 Q12 7 13 10 Q11 13 9 12Z M8 2 Q12 2 13 5 L10 5Z" fill="#30b030"/></svg>
<div class="abs" style="left:1133px;top:1023px;width:1px;height:16px;background:#a0a0a0"></div>
<div class="t" style="left:1141px;top:1025px;font-size:12px">拴牢</div>
<div class="abs" style="left:1176px;top:1023px;width:1px;height:16px;background:#a0a0a0"></div>
<div class="abs" style="left:1206px;top:1023px;width:1px;height:16px;background:#a0a0a0"></div>
<div class="abs" style="left:1237px;top:1023px;width:1px;height:16px;background:#a0a0a0"></div>
<div class="abs" style="left:1268px;top:1023px;width:1px;height:16px;background:#a0a0a0"></div>
<div class="abs" style="left:1299px;top:1023px;width:1px;height:16px;background:#a0a0a0"></div>
<div class="abs" style="left:1330px;top:1023px;width:1px;height:16px;background:#a0a0a0"></div>
<div class="abs" style="left:1361px;top:1023px;width:1px;height:16px;background:#a0a0a0"></div>
<div class="abs" style="left:1392px;top:1023px;width:1px;height:16px;background:#a0a0a0"></div>
<div class="abs" style="left:1423px;top:1023px;width:1px;height:16px;background:#a0a0a0"></div>
<div class="abs" style="left:1454px;top:1023px;width:1px;height:16px;background:#a0a0a0"></div>
<svg class="abs" style="left:1182px;top:1022px" width="18" height="18" viewBox="0 0 18 18"><rect x="1" y="1" width="16" height="16" fill="#c8ccd8" stroke="#666" stroke-width="1.2"/><path d="M4 8 Q5 4 9 4 L9 2 L12 5 L9 8 L9 6 Q6 6 4 8Z M14 10 Q13 14 9 14 L9 16 L6 13 L9 10 L9 12 Q12 12 14 10Z" fill="#f08080"/></svg>
<div class="abs" style="left:1212px;top:1022px;width:20px;height:18px;background:#ffe27a"></div>
<svg class="abs" style="left:1213px;top:1022px" width="18" height="18" viewBox="0 0 18 18"><path d="M2 2 L8 4 L6 8 Z" fill="#f0b030"/><path d="M6 6 L10 17 L12 13 L16 17 L17 15 L13 12 L16 10Z" fill="#e8e8e8" stroke="#777" stroke-width=".7"/><circle cx="6" cy="5" r="3" fill="#c060e0" opacity=".7"/></svg>
<svg class="abs" style="left:1244px;top:1022px" width="18" height="18" viewBox="0 0 18 18"><path d="M4 8 Q8 2 16 4 L17 8 L9 11Z" fill="#f0c890" stroke="#a07040" stroke-width=".6"/><rect x="4" y="10" width="9" height="8" fill="#d0e0f0" stroke="#5070a0" stroke-width=".6"/><path d="M6 13 H11 M8 11 V17" stroke="#2050e0" stroke-width="1"/></svg>
<svg class="abs" style="left:1275px;top:1022px" width="18" height="18" viewBox="0 0 18 18"><text x="9" y="15" font-size="17" font-weight="bold" text-anchor="middle" font-family="Liberation Sans" fill="#3a6ac8">?</text><ellipse cx="10" cy="17" rx="5" ry="1.3" fill="#8890a0" opacity=".6"/></svg>
<svg class="abs" style="left:1306px;top:1022px" width="18" height="18" viewBox="0 0 18 18"><path d="M4 3 L9 1 L13 3 L13 8 L9 10 L4 8Z" fill="#5090f0"/><path d="M8 9 L13 7 L18 9 L18 15 L13 17 L8 15Z" fill="#6a9aa8" stroke="#223" stroke-width=".8"/><path d="M1 12 H8 M4 9 L8 12 L4 15" stroke="#e01010" stroke-width="1.6" fill="none"/></svg>
<div class="abs" style="left:1336px;top:1022px;width:20px;height:18px;background:#ffe27a"></div>
<svg class="abs" style="left:1337px;top:1022px" width="18" height="18" viewBox="0 0 18 18"><path d="M3 4 L10 1 L17 4 L10 7Z" fill="#d030f0"/><path d="M3 4 L10 7 V18 L3 15Z" fill="#90a8b0" stroke="#4070b0" stroke-width=".8"/><path d="M17 4 L10 7 V18 L17 15Z" fill="#7a98a8" stroke="#4070b0" stroke-width=".8"/></svg>
<svg class="abs" style="left:1368px;top:1022px" width="18" height="18" viewBox="0 0 18 18"><rect x="3" y="6" width="13" height="12" fill="none" stroke="#2a6a4a" stroke-width="1.2"/></svg>
<svg class="abs" style="left:1399px;top:1022px" width="18" height="18" viewBox="0 0 18 18"></svg>
<svg class="abs" style="left:1430px;top:1022px" width="18" height="18" viewBox="0 0 18 18"><rect x="2" y="5" width="16" height="13" fill="none" stroke="#506080" stroke-width="1.4"/><path d="M2 11 H18 M10 5 V18" stroke="#506080" stroke-width="1.4"/></svg>
<div class="t" style="left:1463px;top:1025px;font-size:12px">LS: 1.00 PS: 1.00</div>
<div class="abs" style="left:1581px;top:1023px;width:1px;height:16px;background:#a0a0a0"></div>
<div class="t" style="left:1589px;top:1025px;font-size:12px">单位: 毫米</div>
<div class="abs" style="left:1655px;top:1023px;width:1px;height:16px;background:#a0a0a0"></div>
<div class="t" style="left:1663px;top:1025px;font-size:12px;letter-spacing:0.45px"><span style="color:#e01010">X =-34321.26</span> Y = 13924.12 Z = 00000.00</div>
<svg class="abs" style="left:0;top:0" width="1920" height="1048" viewBox="0 0 1920 1048">
<circle cx="1367.4" cy="1005.4" r="8.2" fill="#946656"/><path d="M1363 1010 L1367.4 999.5 L1371.8 1010 M1364.6 1006.5 H1370.2" stroke="#fff" stroke-width="1.5" fill="none"/>
<circle cx="1374.3" cy="1026" r="8.3" fill="#946656"/><path d="M1369 1023 L1372 1020.5 H1376.6 L1379.6 1023 L1378 1025 L1377 1024.5 V1030.5 H1371.6 V1024.5 L1370.6 1025Z" fill="#fff"/>
<ellipse cx="1406" cy="1037.5" rx="15" ry="2.5" fill="#b07a50" opacity=".85"/>
<path d="M1400 968 Q1397 963 1400 962 Q1403 962 1403 967 L1404 973 M1409 975 L1409.5 968 Q1410 965 1411 967" stroke="#8a5028" stroke-width="1.8" fill="none"/>
<circle cx="1389.7" cy="977.5" r="6" fill="#c8884a" stroke="#8a5028" stroke-width=".8"/><circle cx="1389.5" cy="978" r="2.5" fill="#f0b8a0"/>
<circle cx="1423" cy="977.5" r="6" fill="#c8884a" stroke="#8a5028" stroke-width=".8"/><circle cx="1423.5" cy="978" r="2.5" fill="#f0b8a0"/>
<path d="M1387 1018 Q1383 1022 1387 1025 L1392 1023 L1395 1037 H1420 L1422 1023 L1427 1024 Q1430 1020 1425 1017Z" fill="#f8ea50" stroke="#c89040" stroke-width=".6"/>
<ellipse cx="1406.3" cy="997" rx="26.4" ry="21.5" fill="#c8884a" stroke="#8a5028" stroke-width=".8"/>
<ellipse cx="1406.4" cy="1001" rx="20.7" ry="16.8" fill="#fbe852" stroke="#b87a38" stroke-width=".6"/>
<circle cx="1395.4" cy="993.6" r="1.5" fill="#4a2a10"/><circle cx="1416.5" cy="993.6" r="1.5" fill="#4a2a10"/><path d="M1405 997.8 H1408" stroke="#4a2a10" stroke-width=".9"/>
<circle cx="1389.5" cy="1000" r="3.2" fill="#f6a040" opacity=".75"/><circle cx="1423.3" cy="1000" r="3.2" fill="#f6a040" opacity=".75"/>
<path d="M1404 1019 L1411 1023 L1405 1030" stroke="#8a5028" stroke-width="1" fill="none"/>
<circle cx="1395.4" cy="1029.5" r="6.5" fill="#c8884a" stroke="#8a5028" stroke-width=".6"/><circle cx="1390.5" cy="1023.5" r="2.3" fill="#c8884a"/><circle cx="1400.5" cy="1023.5" r="2.3" fill="#c8884a"/>
<circle cx="1392.5" cy="1030" r="1.2" fill="#f080c0"/><circle cx="1399" cy="1030" r="1.2" fill="#f080c0"/>
<path d="M1437 975 L1440.5 988 L1445.5 980 L1450.5 988 L1454 975" fill="none" stroke="#c8884a" stroke-width="7" stroke-linejoin="round" stroke-linecap="round"/><path d="M1437 975 L1440.5 988 L1445.5 980 L1450.5 988 L1454 975" fill="none" stroke="#fff" stroke-width="4.5" stroke-linejoin="round" stroke-linecap="round"/><circle cx="1439" cy="977" r="1.2" fill="#d8a070"/><circle cx="1449" cy="980" r="1.2" fill="#d8a070"/>
<ellipse cx="1446.5" cy="1002" rx="9.5" ry="10.5" fill="#c8905a" stroke="#8a5028" stroke-width=".8"/><circle cx="1439.5" cy="992.5" r="3" fill="#c8905a" stroke="#8a5028" stroke-width=".6"/><circle cx="1453.5" cy="992.5" r="3" fill="#c8905a" stroke="#8a5028" stroke-width=".6"/>
<ellipse cx="1446.5" cy="1002.5" rx="3.5" ry="4.5" fill="#fff"/>
<path d="M1439 1015 L1442.5 1030 L1447 1021 L1451.5 1030 L1454.5 1015" fill="none" stroke="#d8a040" stroke-width="7" stroke-linejoin="round" stroke-linecap="round"/><path d="M1439 1015 L1442.5 1030 L1447 1021 L1451.5 1030 L1454.5 1015" fill="none" stroke="#f8ea50" stroke-width="4.5" stroke-linejoin="round" stroke-linecap="round"/>
</svg>
<div class="abs" style="left:0px;top:1040px;width:1920px;height:8px;background:#1e1e1e"></div>
<div class="abs" style="left:48px;top:1040px;width:344px;height:8px;background:#f0f0f0"></div>
<div class="abs" style="left:589px;top:1040px;width:48px;height:8px;background:#555"></div>
<div class="t" style="left:1816px;top:1044px;font-size:11.5px;color:#e8e8e8;line-height:12px">10:07</div>
<div class="abs" style="left:1915px;top:1040px;width:1px;height:8px;background:#808080"></div>
</body></html>
